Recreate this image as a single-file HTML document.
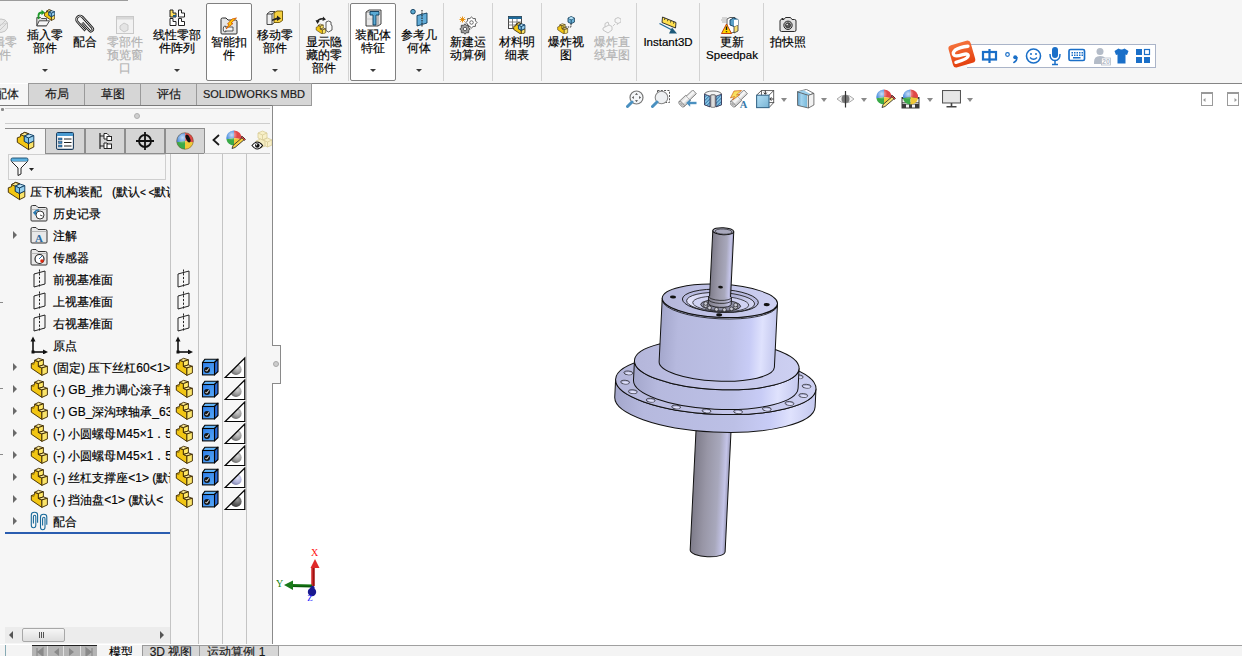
<!DOCTYPE html><html><head><meta charset="utf-8"><style>
*{margin:0;padding:0;box-sizing:border-box}
html,body{width:1242px;height:656px;overflow:hidden;background:#fff;font-family:"Liberation Sans",sans-serif;font-size:12px;color:#000;-webkit-text-stroke:0.18px currentColor}
div,svg{position:absolute}
.tx{white-space:nowrap;text-align:center;font-size:12px;line-height:13px;color:#000}
.dis{color:#b2b2b2}
.sep{top:3px;width:1px;height:78px;background:#d2d2d2}
.arr{width:0;height:0;border-left:3px solid transparent;border-right:3px solid transparent;border-top:3px solid #3a3a3a}
.box{top:3px;height:78px;border:1px solid #808080;border-radius:2px;background:#fff}
.tab{top:83px;height:23px;background:#d6d6d6;border:1px solid #9a9a9a;text-align:center;line-height:21px;font-size:12px;color:#1a1a1a}
.row{height:22px;white-space:nowrap;line-height:22px;font-size:12px;color:#000}
.vl{top:154px;width:1px;height:490px;background:#c4c4c4}
.exp{width:0;height:0;border-top:4px solid transparent;border-bottom:4px solid transparent;border-left:4px solid #6a6a6a}
.harr{width:0;height:0;border-left:3.5px solid transparent;border-right:3.5px solid transparent;border-top:4px solid #8a8a8a}
</style></head><body>
<div style="left:0;top:0;width:1242px;height:83px;background:#f6f6f6"></div>
<div style="left:28px;top:83px;width:1214px;height:1px;background:#858585"></div>
<div style="left:0;top:0;width:128px;height:1px;background:#9c9c9c"></div>
<div class="box" style="left:206px;width:46px"></div>
<div class="box" style="left:350px;width:46px"></div>
<div class="sep" style="left:299px"></div>
<div class="sep" style="left:348px"></div>
<div class="sep" style="left:443px"></div>
<div class="sep" style="left:492px"></div>
<div class="sep" style="left:541px"></div>
<div class="sep" style="left:636px"></div>
<div class="sep" style="left:699px"></div>
<div class="sep" style="left:763px"></div>
<div class="tx dis" style="left:-41px;width:80px;top:35.75px">编辑零<br>部件</div>
<div class="tx" style="left:5px;width:80px;top:28.75px">插入零<br>部件</div>
<div class="arr" style="left:42px;top:69px"></div>
<div class="tx" style="left:45px;width:80px;top:35.75px">配合</div>
<div class="tx dis" style="left:85px;width:80px;top:35.75px">零部件<br>预览窗<br>口</div>
<div class="tx" style="left:136.5px;width:80px;top:28.75px">线性零部<br>件阵列</div>
<div class="arr" style="left:173.5px;top:69px"></div>
<div class="tx" style="left:189px;width:80px;top:35.75px">智能扣<br>件</div>
<div class="tx" style="left:235px;width:80px;top:28.75px">移动零<br>部件</div>
<div class="arr" style="left:272px;top:69px"></div>
<div class="tx" style="left:284px;width:80px;top:36.25px">显示隐<br>藏的零<br>部件</div>
<div class="tx" style="left:333px;width:80px;top:28.75px">装配体<br>特征</div>
<div class="arr" style="left:370px;top:69px"></div>
<div class="tx" style="left:379px;width:80px;top:28.75px">参考几<br>何体</div>
<div class="arr" style="left:416px;top:69px"></div>
<div class="tx" style="left:428px;width:80px;top:35.75px">新建运<br>动算例</div>
<div class="tx" style="left:477px;width:80px;top:35.75px">材料明<br>细表</div>
<div class="tx" style="left:526px;width:80px;top:35.75px">爆炸视<br>图</div>
<div class="tx dis" style="left:572px;width:80px;top:35.75px">爆炸直<br>线草图</div>
<div class="tx" style="left:628px;width:80px;top:35.75px"><span style="font-size:11.5px">Instant3D</span></div>
<div class="tx" style="left:692px;width:80px;top:35.75px">更新<br><span style="font-size:11.5px">Speedpak</span></div>
<div class="tx" style="left:748px;width:80px;top:35.75px">拍快照</div>
<svg style="left:-8px;top:16px;width:18px;height:18px" viewBox="0 0 18 18"><path d="M2 7 Q4 3 9 3 Q14 3 15.5 7 L15.5 12 Q14 16 9 16.5 Q4 16 2 12Z" fill="#e8e8e8" stroke="#c4c4c4" stroke-width="1"/><path d="M5 13 L13 5 M7 15 L15 7" stroke="#c8c8c8" stroke-width="1"/><path d="M2 7 Q9 10 15.5 7" fill="none" stroke="#cfcfcf" stroke-width="0.8"/></svg>
<svg style="left:36px;top:9px;width:19px;height:18px" viewBox="0 0 19 18"><path d="M0.8 8.5 L4.5 8.5 L5.5 9.5 L10.5 9.5 L10.5 16.8 L0.8 16.8Z" fill="#dcdcdc" stroke="#3a3a3a" stroke-width="0.9"/><path d="M0.8 16.8 L3.2 11.8 L13.5 11.8 L10.5 16.8Z" fill="#f6f6f6" stroke="#3a3a3a" stroke-width="0.9"/><path d="M2.5 10 L2.5 6.5 Q2.5 3.5 6 3.5" fill="none" stroke="#1e9a2a" stroke-width="1.8"/><path d="M5.5 0.8 L9 3.5 L5.5 6.2Z" fill="#1e9a2a"/><g transform="translate(8.3 0.5) scale(0.62) translate(-3 -2)"><path d="M3.3 12.3 L3.3 7.8 L6.6 6.6 L6.6 4.6 L10.6 2.4 L14.7 3.8 L10.3 6.2 L10.3 11.4 L14.5 13.5 L14.5 19.6Z" fill="#f2c614" stroke="#3a2600" stroke-width="1.2" stroke-linejoin="round"/><path d="M6.6 4.6 L10.6 2.4 L14.7 3.8 L10.3 6.2Z" fill="#f8e690" stroke="#3a2600" stroke-width="1.2" stroke-linejoin="round"/><path d="M14.5 13.5 L19.8 11 L19.8 17 L14.5 19.6Z" fill="#fae46a" stroke="#3a2600" stroke-width="1.2" stroke-linejoin="round"/><path d="M10.3 6.1 L15 4 L19.8 5.6 L14.5 8Z" fill="#b8e0f4" stroke="#0c3a60" stroke-width="1.2" stroke-linejoin="round"/><path d="M10.3 6.1 L14.5 8 L14.5 13.5 L10.3 11.4Z" fill="#7cc0e6" stroke="#0c3a60" stroke-width="1.2" stroke-linejoin="round"/><path d="M14.5 8 L19.8 5.6 L19.8 11 L14.5 13.5Z" fill="#98d0ee" stroke="#0c3a60" stroke-width="1.2" stroke-linejoin="round"/></g></svg>
<svg style="left:74px;top:14px;width:22px;height:22px" viewBox="0 0 22 22"><g transform="translate(11 11) rotate(-42) translate(-4 -11.5)"><path d="M3.5 8 L3.5 18.5 A2 2 0 0 0 7.5 18.5 L7.5 4 A3.5 3.5 0 0 0 0.5 4 L0.5 16" fill="none" stroke="#1a1a1a" stroke-width="2.5"/><path d="M3.5 8 L3.5 18.5 A2 2 0 0 0 7.5 18.5 L7.5 4 A3.5 3.5 0 0 0 0.5 4 L0.5 16" fill="none" stroke="#f4f4f4" stroke-width="0.8"/></g></svg>
<svg style="left:116px;top:16px;width:18px;height:18px" viewBox="0 0 18 18"><rect x="0.5" y="0.5" width="17" height="17" fill="#f2f2f2" stroke="#c8c8c8" stroke-width="1"/><rect x="1" y="1" width="16" height="2.5" fill="#d8d8d8"/><path d="M4 10 L8 7 L12 9 L12 14 L8 16 L4 13Z" fill="#e4e4e4" stroke="#c4c4c4" stroke-width="0.9"/></svg>
<svg style="left:169px;top:9px;width:17px;height:17px" viewBox="0 0 17 17"><path d="M1 1 L4 1 L4 4 L7 4 L7 8 L1 8Z" fill="#ffe060" stroke="#222" stroke-width="1"/><rect x="4" y="6" width="3" height="1.8" fill="#1a5a8a"/><path d="M9.5 1 L12.5 1 L12.5 4 L15.5 4 L15.5 8 L9.5 8Z" fill="#fff" stroke="#222" stroke-width="1"/><path d="M1 9.5 L4 9.5 L4 12.5 L7 12.5 L7 16.5 L1 16.5Z" fill="#fff" stroke="#222" stroke-width="1"/><path d="M9.5 9.5 L12.5 9.5 L12.5 12.5 L15.5 12.5 L15.5 16.5 L9.5 16.5Z" fill="#fff" stroke="#222" stroke-width="1"/></svg>
<svg style="left:220px;top:17px;width:18px;height:18px" viewBox="0 0 18 18"><path d="M1 2.5 Q1 1 2.5 1 L6 1 L8 3 L15.5 3 Q17 3 17 4.5 L17 16 Q17 17 16 17 L2 17 Q1 17 1 16Z" fill="#e6e6e6" stroke="#2a2a2a" stroke-width="1"/><ellipse cx="5" cy="12" rx="1.8" ry="3" fill="#f4f4f4" stroke="#333" stroke-width="0.8"/><path d="M5 10 L13 10 L13 14 L5 14" fill="#f4f4f4" stroke="#333" stroke-width="0.8"/><path d="M16.5 1 L11 6 L13 6.5 L6 12 L9 7.5 L7.5 7 L12 2Z" fill="#ffcc00" stroke="#d05000" stroke-width="0.8"/></svg>
<svg style="left:266px;top:10px;width:18px;height:17px" viewBox="0 0 18 17"><path d="M1 4 L4 1.5 L9 1.5 L9 12 L6 14.5 L1 14.5Z" fill="#f0f0f0" stroke="#333" stroke-width="0.9"/><path d="M1 4 L6 4 L6 14.5 M6 4 L9 1.5" fill="none" stroke="#333" stroke-width="0.9"/><path d="M8 3 L11 1 L16.5 1 L16.5 10.5 L13.5 12.5 L8 12.5Z" fill="#f4d040" stroke="#6a5000" stroke-width="0.9"/><path d="M6 9.5 L11 7.5 L11 5.5 L15 8.5 L11 11 L11 9.5 L6 11Z" fill="#222"/></svg>
<svg style="left:315px;top:16px;width:18px;height:18px" viewBox="0 0 18 18"><path d="M2 6 Q4 2 9 3" fill="none" stroke="#222" stroke-width="1.6"/><path d="M8 0.5 L11 3.5 L7.5 5Z" fill="#222"/><path d="M0.5 4 L2.5 8 L4.5 5Z" fill="#222"/><g transform="translate(1 8) scale(0.589) translate(-3 -2)"><path d="M3.3 12.2 L3.3 7.6 L6.6 6.4 L6.6 4.3 L10.4 5.6 L10.4 10.5 L13.9 11.9 L13.9 19.4Z" fill="#f2c614" stroke="#3a2600" stroke-width="0.9" stroke-linejoin="round"/><path d="M6.6 4.3 L10.6 2.3 L15.4 3.8 L10.4 5.6Z" fill="#f8e690" stroke="#3a2600" stroke-width="0.9" stroke-linejoin="round"/><path d="M10.4 5.6 L15.4 3.8 L15.4 8.9 L10.4 10.5Z" fill="#ffe868" stroke="#3a2600" stroke-width="0.9" stroke-linejoin="round"/><path d="M10.4 10.5 L15.4 8.9 L19.4 10.3 L13.9 11.9Z" fill="#faeaa0" stroke="#3a2600" stroke-width="0.9" stroke-linejoin="round"/><path d="M13.9 11.9 L19.4 10.3 L19.4 16.9 L13.9 19.4Z" fill="#fae46a" stroke="#3a2600" stroke-width="0.9" stroke-linejoin="round"/></g><path d="M11 6 L13.5 5 L16 6 L16 9 L17 9.5 L17 14 L13.5 16 L11 14.5Z" fill="#fafafa" stroke="#333" stroke-width="0.8"/></svg>
<svg style="left:365px;top:9px;width:17px;height:18px" viewBox="0 0 17 18"><path d="M1 3 L4 1 L16 1 L16 15 L13 17 L1 17Z" fill="#e8e8e8" stroke="#2a2a2a" stroke-width="0.9"/><path d="M1 3 L13 3 L13 17" fill="none" stroke="#666" stroke-width="0.7"/><path d="M1.5 10 L13 10" stroke="#bbb" stroke-width="0.6"/><path d="M5 2.5 L14 2.5 L14 6 L11 6 L11 16 L8 16 L8 6 L5 6Z" fill="#5aaad4" stroke="#0c3a5a" stroke-width="0.9"/></svg>
<svg style="left:410px;top:9px;width:18px;height:18px" viewBox="0 0 18 18"><circle cx="3" cy="2.7" r="2.3" fill="#5aa8d0" stroke="#0c3a5a" stroke-width="0.9"/><path d="M7 6.5 L17 4 L17 14 L7 17Z" fill="#62acd8" stroke="#0c3a5a" stroke-width="0.9"/><path d="M12 1 L12 18" stroke="#111" stroke-width="1" stroke-dasharray="1.5 1"/></svg>
<svg style="left:459px;top:16px;width:19px;height:19px" viewBox="0 0 19 19"><path d="M18.00 6.50 L16.46 8.14 L16.39 10.39 L14.14 10.46 L12.50 12.00 L10.86 10.46 L8.61 10.39 L8.54 8.14 L7.00 6.50 L8.54 4.86 L8.61 2.61 L10.86 2.54 L12.50 1.00 L14.14 2.54 L16.39 2.61 L16.46 4.86Z" fill="#fff" stroke="#333" stroke-width="0.8" stroke-linejoin="round"/><circle cx="12.5" cy="6.5" r="1.76" fill="#fff" stroke="#333" stroke-width="0.7"/><path d="M11.20 13.00 L9.75 14.55 L9.68 16.68 L7.55 16.75 L6.00 18.20 L4.45 16.75 L2.32 16.68 L2.25 14.55 L0.80 13.00 L2.25 11.45 L2.32 9.32 L4.45 9.25 L6.00 7.80 L7.55 9.25 L9.68 9.32 L9.75 11.45Z" fill="#9a9a9a" stroke="#333" stroke-width="0.8" stroke-linejoin="round"/><circle cx="6" cy="13" r="1.66" fill="#fff" stroke="#333" stroke-width="0.7"/><path d="M3.5 0.5 L3.5 6.5 M0.5 3.5 L6.5 3.5 M1.3 1.3 L5.7 5.7 M5.7 1.3 L1.3 5.7" stroke="#e88a00" stroke-width="0.9"/></svg>
<svg style="left:508px;top:16px;width:18px;height:18px" viewBox="0 0 18 18"><rect x="0.5" y="0.5" width="13" height="12" fill="#fff" stroke="#333" stroke-width="0.9"/><rect x="0.5" y="0.5" width="13" height="2.5" fill="#1e6a9a"/><path d="M0.5 6 L13.5 6 M0.5 9 L13.5 9 M4.5 3 L4.5 12.5 M9 3 L9 12.5" stroke="#666" stroke-width="0.8"/><g transform="translate(5.5 6.5) scale(0.68) translate(-3 -2)"><path d="M3.3 12.3 L3.3 7.8 L6.6 6.6 L6.6 4.6 L10.6 2.4 L14.7 3.8 L10.3 6.2 L10.3 11.4 L14.5 13.5 L14.5 19.6Z" fill="#f2c614" stroke="#3a2600" stroke-width="1.2" stroke-linejoin="round"/><path d="M6.6 4.6 L10.6 2.4 L14.7 3.8 L10.3 6.2Z" fill="#f8e690" stroke="#3a2600" stroke-width="1.2" stroke-linejoin="round"/><path d="M14.5 13.5 L19.8 11 L19.8 17 L14.5 19.6Z" fill="#fae46a" stroke="#3a2600" stroke-width="1.2" stroke-linejoin="round"/><path d="M10.3 6.1 L15 4 L19.8 5.6 L14.5 8Z" fill="#b8e0f4" stroke="#0c3a60" stroke-width="1.2" stroke-linejoin="round"/><path d="M10.3 6.1 L14.5 8 L14.5 13.5 L10.3 11.4Z" fill="#7cc0e6" stroke="#0c3a60" stroke-width="1.2" stroke-linejoin="round"/><path d="M14.5 8 L19.8 5.6 L19.8 11 L14.5 13.5Z" fill="#98d0ee" stroke="#0c3a60" stroke-width="1.2" stroke-linejoin="round"/></g></svg>
<svg style="left:557px;top:16px;width:18px;height:18px" viewBox="0 0 18 18"><g transform="translate(0.5 7.5) scale(0.62) translate(-3 -2)"><path d="M3.3 12.2 L3.3 7.6 L6.6 6.4 L6.6 4.3 L10.4 5.6 L10.4 10.5 L13.9 11.9 L13.9 19.4Z" fill="#f2c614" stroke="#3a2600" stroke-width="0.9" stroke-linejoin="round"/><path d="M6.6 4.3 L10.6 2.3 L15.4 3.8 L10.4 5.6Z" fill="#f8e690" stroke="#3a2600" stroke-width="0.9" stroke-linejoin="round"/><path d="M10.4 5.6 L15.4 3.8 L15.4 8.9 L10.4 10.5Z" fill="#ffe868" stroke="#3a2600" stroke-width="0.9" stroke-linejoin="round"/><path d="M10.4 10.5 L15.4 8.9 L19.4 10.3 L13.9 11.9Z" fill="#faeaa0" stroke="#3a2600" stroke-width="0.9" stroke-linejoin="round"/><path d="M13.9 11.9 L19.4 10.3 L19.4 16.9 L13.9 19.4Z" fill="#fae46a" stroke="#3a2600" stroke-width="0.9" stroke-linejoin="round"/></g><path d="M11.00 2.10 14.20 0.50 17.40 2.10 17.40 6.10 14.20 7.70 11.00 6.10Z" fill="#6fb6dc" stroke="#0c3550" stroke-width="0.8"/><path d="M11.00 2.10 14.20 3.70 17.40 2.10 M14.20 3.70 14.20 7.70" fill="none" stroke="#0c3550" stroke-width="0.8"/><path d="M11.40 2.26 14.20 0.90 17.00 2.26 14.20 3.54Z" fill="#b8e2f6"/><path d="M6 11 L14 11 L14 7.5" fill="none" stroke="#111" stroke-width="0.9" stroke-dasharray="1.4 1"/></svg>
<svg style="left:602px;top:16px;width:19px;height:18px" viewBox="0 0 19 18"><path d="M1 12 L7 9 L10 10.5 L10 14 L6 17 L1 14Z" fill="#f6f6f6" stroke="#c0c0c0" stroke-width="0.9"/><path d="M3 11 L3 7.5 L6 6 L7 9" fill="none" stroke="#c0c0c0" stroke-width="0.9"/><path d="M13 3 L16 1.5 L19 3 L19 6 L16 7.5 L13 6Z" fill="#f6f6f6" stroke="#c0c0c0" stroke-width="0.9"/><path d="M11 10 L13 8 M15 9 L16 7" stroke="#c4c4c4" stroke-width="0.9"/></svg>
<svg style="left:659px;top:16px;width:18px;height:18px" viewBox="0 0 18 18"><path d="M3.5 1 L17 6.5 L16.5 12 L3 6.5Z" fill="#ffe050" stroke="#222" stroke-width="0.9"/><path d="M6 2 L5.5 4 M9 3.2 L8.5 5.2 M12 4.5 L11.5 6.5 M15 5.7 L14.5 7.7" stroke="#222" stroke-width="0.8"/><path d="M0.5 7.5 L13 14" stroke="#1e6a9a" stroke-width="1.4"/><path d="M10 17.5 L18 17.5 L13 11.5Z" fill="#1e5a7a"/></svg>
<svg style="left:721px;top:16px;width:20px;height:18px" viewBox="0 0 20 18"><path d="M1 2 L6 2 M0 4 L5 4 M1 6 L5 6" stroke="#888" stroke-width="0.6"/><path d="M6 3 L9 1.5 L14 1.5 L14 16 L10 17 L6 16Z" fill="#fff" stroke="#333" stroke-width="0.8"/><path d="M9 4 L12.5 2 L17 3.5 L17 9 L13 10.5 L9 9Z" fill="#5aa0c8" stroke="#0c3a5a" stroke-width="0.9"/><path d="M13 10.5 L17 9 L17 15 L13 17Z" fill="#f8e070" stroke="#333" stroke-width="0.8"/><path d="M13 4 L17 3.5 L17 9 L13 10.5Z" fill="#fff"/><path d="M5.5 8 L10.5 17.5 L0.5 17.5Z" fill="#ffd400" stroke="#c03000" stroke-width="0.9"/><path d="M5.5 10.5 L5.5 14 M5.5 15.2 L5.5 16.3" stroke="#111" stroke-width="1.4"/></svg>
<svg style="left:779px;top:16px;width:18px;height:16px" viewBox="0 0 18 16"><path d="M1 5 Q1 3.5 2.5 3.5 L5 3.5 L6.5 1.5 L11.5 1.5 L13 3.5 L15.5 3.5 Q17 3.5 17 5 L17 14 Q17 15.5 15.5 15.5 L2.5 15.5 Q1 15.5 1 14Z" fill="#e4e4e4" stroke="#2a2a2a" stroke-width="1"/><path d="M2.5 2.5 L4.5 2.5" stroke="#2a2a2a" stroke-width="1"/><circle cx="9" cy="9.3" r="4.2" fill="#bdbdbd" stroke="#2a2a2a" stroke-width="1"/><circle cx="9" cy="9.3" r="2.5" fill="#555" stroke="#222" stroke-width="0.7"/><circle cx="8.2" cy="8.5" r="0.8" fill="#eee"/></svg>
<svg style="left:560px;top:200px;width:300px;height:380px" viewBox="560 200 300 380"><defs><linearGradient id="gH" x1="0" x2="1" y1="0" y2="0"><stop offset="0" stop-color="#a4a7cc"/><stop offset="0.15" stop-color="#b6b9de"/><stop offset="0.6" stop-color="#bcc0e6"/><stop offset="0.78" stop-color="#c8ccf6"/><stop offset="0.88" stop-color="#dfe2fd"/><stop offset="1" stop-color="#c4c8ee"/></linearGradient><linearGradient id="gT" x1="0" x2="1" y1="0" y2="0"><stop offset="0" stop-color="#b4b6da"/><stop offset="0.5" stop-color="#c2c4e8"/><stop offset="1" stop-color="#cdd0f2"/></linearGradient><linearGradient id="gS" x1="0" x2="1" y1="0" y2="0"><stop offset="0" stop-color="#7e7c8a"/><stop offset="0.35" stop-color="#9896a6"/><stop offset="0.7" stop-color="#a8a8bc"/><stop offset="0.9" stop-color="#c4c4e8"/><stop offset="1" stop-color="#9a9ab8"/></linearGradient></defs><g transform="translate(716 380) rotate(2.8)" stroke="#111" stroke-width="1" stroke-linejoin="round"><path d="M-17.5 10 L-17.5 171 A17.5 6 0 0 0 17.5 171 L17.5 10Z" fill="url(#gS)"/><path d="M-100.3 4.2 L-100.3 22 A100.3 30 0 0 0 100.3 22 L100.3 4.2 A100.3 30 0 0 1 -100.3 4.2Z" fill="url(#gH)"/><ellipse cx="0" cy="4.2" rx="100.3" ry="30" fill="url(#gT)"/><ellipse cx="87.9" cy="11.2" rx="4.4" ry="1.9" fill="#aeb0d4" stroke="#222" stroke-width="0.7"/><ellipse cx="88.3" cy="11.7" rx="3.2" ry="1.1" fill="#dfe0fa" stroke="none"/><ellipse cx="74.5" cy="19.8" rx="4.4" ry="1.9" fill="#aeb0d4" stroke="#222" stroke-width="0.7"/><ellipse cx="74.9" cy="20.3" rx="3.2" ry="1.1" fill="#dfe0fa" stroke="none"/><ellipse cx="52.2" cy="26.5" rx="4.4" ry="1.9" fill="#aeb0d4" stroke="#222" stroke-width="0.7"/><ellipse cx="52.6" cy="27.0" rx="3.2" ry="1.1" fill="#dfe0fa" stroke="none"/><ellipse cx="23.6" cy="30.5" rx="4.4" ry="1.9" fill="#aeb0d4" stroke="#222" stroke-width="0.7"/><ellipse cx="24.0" cy="31.0" rx="3.2" ry="1.1" fill="#dfe0fa" stroke="none"/><ellipse cx="-7.9" cy="31.3" rx="4.4" ry="1.9" fill="#aeb0d4" stroke="#222" stroke-width="0.7"/><ellipse cx="-7.5" cy="31.8" rx="3.2" ry="1.1" fill="#dfe0fa" stroke="none"/><ellipse cx="-38.5" cy="28.9" rx="4.4" ry="1.9" fill="#aeb0d4" stroke="#222" stroke-width="0.7"/><ellipse cx="-38.1" cy="29.4" rx="3.2" ry="1.1" fill="#dfe0fa" stroke="none"/><ellipse cx="-64.3" cy="23.4" rx="4.4" ry="1.9" fill="#aeb0d4" stroke="#222" stroke-width="0.7"/><ellipse cx="-63.9" cy="23.9" rx="3.2" ry="1.1" fill="#dfe0fa" stroke="none"/><ellipse cx="-82.5" cy="15.7" rx="4.4" ry="1.9" fill="#aeb0d4" stroke="#222" stroke-width="0.7"/><ellipse cx="-82.1" cy="16.2" rx="3.2" ry="1.1" fill="#dfe0fa" stroke="none"/><ellipse cx="-90.7" cy="6.6" rx="4.4" ry="1.9" fill="#aeb0d4" stroke="#222" stroke-width="0.7"/><ellipse cx="-90.3" cy="7.1" rx="3.2" ry="1.1" fill="#dfe0fa" stroke="none"/><ellipse cx="-87.9" cy="-2.8" rx="4.4" ry="1.9" fill="#aeb0d4" stroke="#222" stroke-width="0.7"/><ellipse cx="-87.5" cy="-2.3" rx="3.2" ry="1.1" fill="#dfe0fa" stroke="none"/><ellipse cx="82.5" cy="-7.3" rx="4.4" ry="1.9" fill="#aeb0d4" stroke="#222" stroke-width="0.7"/><ellipse cx="82.9" cy="-6.8" rx="3.2" ry="1.1" fill="#dfe0fa" stroke="none"/><ellipse cx="90.7" cy="1.8" rx="4.4" ry="1.9" fill="#aeb0d4" stroke="#222" stroke-width="0.7"/><ellipse cx="91.1" cy="2.3" rx="3.2" ry="1.1" fill="#dfe0fa" stroke="none"/><path d="M-82.4 -15.5 L-82.4 4.2 A82.4 25 0 0 0 82.4 4.2 L82.4 -15.5 A82.4 25 0 0 1 -82.4 -15.5Z" fill="url(#gH)"/><ellipse cx="0" cy="-15.5" rx="82.4" ry="25" fill="url(#gT)"/><path d="M-57.7 -79.3 L-57.7 -15.5 A57.7 16.5 0 0 0 57.7 -15.5 L57.7 -79.3 A57.7 16.5 0 0 1 -57.7 -79.3Z" fill="url(#gH)"/><ellipse cx="0" cy="-79.3" rx="57.7" ry="16.5" fill="url(#gT)"/><path d="M-57.6 -76.8 A57.7 16.5 0 0 0 57.6 -76.8" fill="none" stroke-width="0.8"/><defs><linearGradient id="gB" x1="0" x2="1"><stop offset="0" stop-color="#e6e6fc"/><stop offset="0.4" stop-color="#c4c6ea"/><stop offset="0.7" stop-color="#b0b2d8"/><stop offset="1" stop-color="#d8daf6"/></linearGradient></defs><ellipse cx="0.5" cy="-79.3" rx="38" ry="11.5" fill="#b8badf" stroke-width="0.9"/><ellipse cx="0.8" cy="-77.8" rx="34" ry="9.8" fill="url(#gB)" stroke-width="0.8"/><ellipse cx="1" cy="-76.3" rx="28" ry="7.6" fill="#d0d2f2" stroke-width="0.7"/><ellipse cx="1" cy="-74.8" rx="20" ry="5.6" fill="#8a8aa0" stroke-width="0.7"/><circle cx="16.0" cy="-73.7" r="1.9" fill="#c8c8d4" stroke-width="0.6"/><circle cx="12.0" cy="-71.8" r="1.9" fill="#c8c8d4" stroke-width="0.6"/><circle cx="5.0" cy="-70.6" r="1.9" fill="#c8c8d4" stroke-width="0.6"/><circle cx="-3.0" cy="-70.6" r="1.9" fill="#c8c8d4" stroke-width="0.6"/><circle cx="-10.0" cy="-71.8" r="1.9" fill="#c8c8d4" stroke-width="0.6"/><circle cx="-14.0" cy="-73.7" r="1.9" fill="#c8c8d4" stroke-width="0.6"/><circle cx="-14.0" cy="-75.9" r="1.9" fill="#c8c8d4" stroke-width="0.6"/><circle cx="16.0" cy="-75.9" r="1.9" fill="#c8c8d4" stroke-width="0.6"/><ellipse cx="-47" cy="-80.8" rx="3" ry="1.6" fill="#111" stroke="none"/><ellipse cx="47" cy="-77.8" rx="3" ry="1.6" fill="#111" stroke="none"/><ellipse cx="0" cy="-65.3" rx="3" ry="1.6" fill="#111" stroke="none"/><path d="M-10.5 -149 L-10.5 -78.3 A10.5 3.5 0 0 0 10.5 -78.3 L10.5 -149Z" fill="url(#gS)"/><path d="M-11.5 -83.3 L-11.5 -76.3 A11.5 3.6 0 0 0 11.5 -76.3 L11.5 -83.3" fill="url(#gS)" stroke-width="0.8"/><path d="M-11.5 -83.3 A11.5 3.6 0 0 0 11.5 -83.3 M-11.5 -80.3 A11.5 3.6 0 0 0 11.5 -80.3" fill="none" stroke-width="0.7"/><ellipse cx="0" cy="-149" rx="10.5" ry="3.5" fill="#b4b4c8"/><ellipse cx="0.3" cy="-148.6" rx="8.5" ry="2.6" fill="#a8a8bc" stroke-width="0.6"/><ellipse cx="0" cy="-93" rx="2.4" ry="1.4" fill="#111" stroke="none"/></g></svg>
<div style="left:0;top:84px;width:28px;height:21px;background:#f6f6f6"></div>
<div class="tx" style="left:-30px;width:49px;top:87px;line-height:14px;text-align:right;color:#1a1a1a">装配体</div>
<div class="tab" style="left:28px;width:57px">布局</div>
<div class="tab" style="left:84px;width:57px">草图</div>
<div class="tab" style="left:140px;width:57px">评估</div>
<div class="tab" style="left:196px;width:116px;font-size:11px;white-space:nowrap">SOLIDWORKS MBD</div>
<div style="left:0;top:105px;width:272px;height:539px;background:#f6f6f6"></div>
<div style="left:0;top:105px;width:273px;height:1px;background:#7a7a7a"></div>
<div style="left:1px;top:108px;width:3px;height:3px;background:#8a8a8a;border-radius:1px"></div>
<div style="left:0;top:302px;width:3px;height:1px;background:#8a8a8a"></div>
<div style="left:0;top:388px;width:3px;height:1px;background:#8a8a8a"></div>
<div style="left:0;top:454px;width:3px;height:1px;background:#8a8a8a"></div>
<div style="left:5px;top:108px;width:265px;height:1px;background:#cdcdcd"></div>
<div style="left:5px;top:123px;width:265px;height:1px;background:#cdcdcd"></div>
<div style="left:134px;top:113px;width:6px;height:6px;border-radius:3px;background:#cfcfcf;border:1px solid #b0b0b0"></div>
<div style="left:5px;top:128px;width:200px;height:1px;background:#8e8e8e"></div>
<div style="left:44.5px;top:128px;width:40.5px;height:26px;background:#d5d5d5;border:1px solid #8e8e8e"></div>
<div style="left:84.5px;top:128px;width:40.5px;height:26px;background:#d5d5d5;border:1px solid #8e8e8e"></div>
<div style="left:124.5px;top:128px;width:40.5px;height:26px;background:#d5d5d5;border:1px solid #8e8e8e"></div>
<div style="left:164.5px;top:128px;width:40.5px;height:26px;background:#d5d5d5;border:1px solid #8e8e8e"></div>
<div style="left:204px;top:153px;width:66px;height:1px;background:#c8c8c8"></div>
<div style="left:8px;top:154px;width:158px;height:26px;border:1px solid #cfcfcf"></div>
<div class="vl" style="left:170px"></div>
<div class="vl" style="left:198px"></div>
<div class="vl" style="left:222px"></div>
<div class="vl" style="left:246px"></div>
<div style="left:0;top:180px;width:170px;height:360px;overflow:hidden">
<div class="row" style="left:30px;top:0.5px">压下机构装配&nbsp;&nbsp; (默认<span style="font-size:10px">&lt;&nbsp;&lt;</span>默认_显示状态-1&gt;&gt;)</div>
<div class="row" style="left:53px;top:22.5px">历史记录</div>
<div class="row" style="left:53px;top:44.5px">注解</div>
<div class="row" style="left:53px;top:66.5px">传感器</div>
<div class="row" style="left:53px;top:88.5px">前视基准面</div>
<div class="row" style="left:53px;top:110.5px">上视基准面</div>
<div class="row" style="left:53px;top:132.5px">右视基准面</div>
<div class="row" style="left:53px;top:154.5px">原点</div>
<div class="row" style="left:53px;top:176.5px">(固定) 压下丝杠60&lt;1&gt; (默认)</div>
<div class="row" style="left:53px;top:198.5px">(-) GB_推力调心滚子轴承</div>
<div class="row" style="left:53px;top:220.5px">(-) GB_深沟球轴承_6306</div>
<div class="row" style="left:53px;top:242.5px">(-) 小圆螺母M45×1．5</div>
<div class="row" style="left:53px;top:264.5px">(-) 小圆螺母M45×1．5</div>
<div class="row" style="left:53px;top:286.5px">(-) 丝杠支撑座&lt;1&gt; (默认)</div>
<div class="row" style="left:53px;top:308.5px">(-) 挡油盘&lt;1&gt; (默认&lt;</div>
<div class="row" style="left:53px;top:330.5px">配合</div>
</div>
<svg style="left:5px;top:180px;width:24px;height:24px" viewBox="0 0 24 24"><path d="M3.3 12.3 L3.3 7.8 L6.6 6.6 L6.6 4.6 L10.6 2.4 L14.7 3.8 L10.3 6.2 L10.3 11.4 L14.5 13.5 L14.5 19.6Z" fill="#f2c614" stroke="#3a2600" stroke-width="0.9" stroke-linejoin="round"/><path d="M6.6 4.6 L10.6 2.4 L14.7 3.8 L10.3 6.2Z" fill="#f8e690" stroke="#3a2600" stroke-width="0.9" stroke-linejoin="round"/><path d="M14.5 13.5 L19.8 11 L19.8 17 L14.5 19.6Z" fill="#fae46a" stroke="#3a2600" stroke-width="0.9" stroke-linejoin="round"/><path d="M10.3 6.1 L15 4 L19.8 5.6 L14.5 8Z" fill="#b8e0f4" stroke="#0c3a60" stroke-width="0.9" stroke-linejoin="round"/><path d="M10.3 6.1 L14.5 8 L14.5 13.5 L10.3 11.4Z" fill="#7cc0e6" stroke="#0c3a60" stroke-width="0.9" stroke-linejoin="round"/><path d="M14.5 8 L19.8 5.6 L19.8 11 L14.5 13.5Z" fill="#98d0ee" stroke="#0c3a60" stroke-width="0.9" stroke-linejoin="round"/></svg>
<svg style="left:30px;top:204px;width:18px;height:18px" viewBox="0 0 18 18"><path d="M1 3 Q1 1.5 2.5 1.5 L6 1.5 L8 3.5 L15.5 3.5 Q17 3.5 17 5 L17 16 Q17 17 16 17 L2 17 Q1 17 1 16Z" fill="#e8e8e8" stroke="#333" stroke-width="1"/><path d="M1.5 5.5 L16.5 5.5" stroke="#aaa" stroke-width="0.8"/><circle cx="10" cy="11" r="4" fill="#fff" stroke="#222" stroke-width="0.9"/><path d="M10 11 L12.5 12" stroke="#222" stroke-width="0.8"/><path d="M4 9.5 A5.5 5.5 0 0 1 9 6" fill="none" stroke="#2a7ab0" stroke-width="1.6"/><path d="M3 8 L5.5 12 L6.5 8Z" fill="#2a7ab0"/></svg>
<div class="exp" style="left:13px;top:231px"></div>
<svg style="left:30px;top:226px;width:18px;height:18px" viewBox="0 0 18 18"><path d="M1 3 Q1 1.5 2.5 1.5 L6 1.5 L8 3.5 L15.5 3.5 Q17 3.5 17 5 L17 16 Q17 17 16 17 L2 17 Q1 17 1 16Z" fill="#e8e8e8" stroke="#333" stroke-width="1"/><path d="M1.5 5.5 L16.5 5.5" stroke="#aaa" stroke-width="0.8"/><text x="9" y="16" font-family="Liberation Serif" font-weight="bold" font-size="11" fill="#2a6aa0" text-anchor="middle">A</text></svg>
<svg style="left:30px;top:248px;width:18px;height:18px" viewBox="0 0 18 18"><path d="M1 3 Q1 1.5 2.5 1.5 L6 1.5 L8 3.5 L15.5 3.5 Q17 3.5 17 5 L17 16 Q17 17 16 17 L2 17 Q1 17 1 16Z" fill="#e8e8e8" stroke="#333" stroke-width="1"/><path d="M1.5 5.5 L16.5 5.5" stroke="#aaa" stroke-width="0.8"/><circle cx="9.5" cy="11" r="4.5" fill="#fff" stroke="#222" stroke-width="1.2"/><path d="M9 11 L12 8" stroke="#2a6aa0" stroke-width="1"/><circle cx="12" cy="13" r="1.8" fill="#e02a10"/></svg>
<svg style="left:33px;top:269px;width:13px;height:20px" viewBox="0 0 13 20"><path d="M1 5 L12 2 L12 15 L1 18Z" fill="none" stroke="#222" stroke-width="1"/><path d="M6.5 0.5 L6.5 19" stroke="#222" stroke-width="1" stroke-dasharray="2.2 1.5"/></svg>
<svg style="left:33px;top:291px;width:13px;height:20px" viewBox="0 0 13 20"><path d="M1 5 L12 2 L12 15 L1 18Z" fill="none" stroke="#222" stroke-width="1"/><path d="M6.5 0.5 L6.5 19" stroke="#222" stroke-width="1" stroke-dasharray="2.2 1.5"/></svg>
<svg style="left:33px;top:313px;width:13px;height:20px" viewBox="0 0 13 20"><path d="M1 5 L12 2 L12 15 L1 18Z" fill="none" stroke="#222" stroke-width="1"/><path d="M6.5 0.5 L6.5 19" stroke="#222" stroke-width="1" stroke-dasharray="2.2 1.5"/></svg>
<svg style="left:30px;top:336px;width:18px;height:18px" viewBox="0 0 18 18"><path d="M3 17 L3 3" stroke="#111" stroke-width="1.6"/><path d="M0.5 5.5 L3 0.5 L5.5 5.5Z" fill="#111"/><path d="M2 16 L15 16" stroke="#111" stroke-width="1.6"/><path d="M13 13.5 L18 16 L13 18.5Z" fill="#111"/><rect x="1.5" y="14.5" width="3" height="3" fill="#111"/></svg>
<div class="exp" style="left:13px;top:363px"></div>
<svg style="left:28px;top:356px;width:24px;height:24px" viewBox="0 0 24 24"><path d="M3.3 12.2 L3.3 7.6 L6.6 6.4 L6.6 4.3 L10.4 5.6 L10.4 10.5 L13.9 11.9 L13.9 19.4Z" fill="#f2c614" stroke="#3a2600" stroke-width="0.9" stroke-linejoin="round"/><path d="M6.6 4.3 L10.6 2.3 L15.4 3.8 L10.4 5.6Z" fill="#f8e690" stroke="#3a2600" stroke-width="0.9" stroke-linejoin="round"/><path d="M10.4 5.6 L15.4 3.8 L15.4 8.9 L10.4 10.5Z" fill="#ffe868" stroke="#3a2600" stroke-width="0.9" stroke-linejoin="round"/><path d="M10.4 10.5 L15.4 8.9 L19.4 10.3 L13.9 11.9Z" fill="#faeaa0" stroke="#3a2600" stroke-width="0.9" stroke-linejoin="round"/><path d="M13.9 11.9 L19.4 10.3 L19.4 16.9 L13.9 19.4Z" fill="#fae46a" stroke="#3a2600" stroke-width="0.9" stroke-linejoin="round"/><path d="M3.3 7.6 L5.2 8.3 L6.6 7.7" fill="none" stroke="#3a2600" stroke-width="0.6"/></svg>
<div class="exp" style="left:13px;top:385px"></div>
<svg style="left:28px;top:378px;width:24px;height:24px" viewBox="0 0 24 24"><path d="M3.3 12.2 L3.3 7.6 L6.6 6.4 L6.6 4.3 L10.4 5.6 L10.4 10.5 L13.9 11.9 L13.9 19.4Z" fill="#f2c614" stroke="#3a2600" stroke-width="0.9" stroke-linejoin="round"/><path d="M6.6 4.3 L10.6 2.3 L15.4 3.8 L10.4 5.6Z" fill="#f8e690" stroke="#3a2600" stroke-width="0.9" stroke-linejoin="round"/><path d="M10.4 5.6 L15.4 3.8 L15.4 8.9 L10.4 10.5Z" fill="#ffe868" stroke="#3a2600" stroke-width="0.9" stroke-linejoin="round"/><path d="M10.4 10.5 L15.4 8.9 L19.4 10.3 L13.9 11.9Z" fill="#faeaa0" stroke="#3a2600" stroke-width="0.9" stroke-linejoin="round"/><path d="M13.9 11.9 L19.4 10.3 L19.4 16.9 L13.9 19.4Z" fill="#fae46a" stroke="#3a2600" stroke-width="0.9" stroke-linejoin="round"/><path d="M3.3 7.6 L5.2 8.3 L6.6 7.7" fill="none" stroke="#3a2600" stroke-width="0.6"/></svg>
<div class="exp" style="left:13px;top:407px"></div>
<svg style="left:28px;top:400px;width:24px;height:24px" viewBox="0 0 24 24"><path d="M3.3 12.2 L3.3 7.6 L6.6 6.4 L6.6 4.3 L10.4 5.6 L10.4 10.5 L13.9 11.9 L13.9 19.4Z" fill="#f2c614" stroke="#3a2600" stroke-width="0.9" stroke-linejoin="round"/><path d="M6.6 4.3 L10.6 2.3 L15.4 3.8 L10.4 5.6Z" fill="#f8e690" stroke="#3a2600" stroke-width="0.9" stroke-linejoin="round"/><path d="M10.4 5.6 L15.4 3.8 L15.4 8.9 L10.4 10.5Z" fill="#ffe868" stroke="#3a2600" stroke-width="0.9" stroke-linejoin="round"/><path d="M10.4 10.5 L15.4 8.9 L19.4 10.3 L13.9 11.9Z" fill="#faeaa0" stroke="#3a2600" stroke-width="0.9" stroke-linejoin="round"/><path d="M13.9 11.9 L19.4 10.3 L19.4 16.9 L13.9 19.4Z" fill="#fae46a" stroke="#3a2600" stroke-width="0.9" stroke-linejoin="round"/><path d="M3.3 7.6 L5.2 8.3 L6.6 7.7" fill="none" stroke="#3a2600" stroke-width="0.6"/></svg>
<div class="exp" style="left:13px;top:429px"></div>
<svg style="left:28px;top:422px;width:24px;height:24px" viewBox="0 0 24 24"><path d="M3.3 12.2 L3.3 7.6 L6.6 6.4 L6.6 4.3 L10.4 5.6 L10.4 10.5 L13.9 11.9 L13.9 19.4Z" fill="#f2c614" stroke="#3a2600" stroke-width="0.9" stroke-linejoin="round"/><path d="M6.6 4.3 L10.6 2.3 L15.4 3.8 L10.4 5.6Z" fill="#f8e690" stroke="#3a2600" stroke-width="0.9" stroke-linejoin="round"/><path d="M10.4 5.6 L15.4 3.8 L15.4 8.9 L10.4 10.5Z" fill="#ffe868" stroke="#3a2600" stroke-width="0.9" stroke-linejoin="round"/><path d="M10.4 10.5 L15.4 8.9 L19.4 10.3 L13.9 11.9Z" fill="#faeaa0" stroke="#3a2600" stroke-width="0.9" stroke-linejoin="round"/><path d="M13.9 11.9 L19.4 10.3 L19.4 16.9 L13.9 19.4Z" fill="#fae46a" stroke="#3a2600" stroke-width="0.9" stroke-linejoin="round"/><path d="M3.3 7.6 L5.2 8.3 L6.6 7.7" fill="none" stroke="#3a2600" stroke-width="0.6"/></svg>
<div class="exp" style="left:13px;top:451px"></div>
<svg style="left:28px;top:444px;width:24px;height:24px" viewBox="0 0 24 24"><path d="M3.3 12.2 L3.3 7.6 L6.6 6.4 L6.6 4.3 L10.4 5.6 L10.4 10.5 L13.9 11.9 L13.9 19.4Z" fill="#f2c614" stroke="#3a2600" stroke-width="0.9" stroke-linejoin="round"/><path d="M6.6 4.3 L10.6 2.3 L15.4 3.8 L10.4 5.6Z" fill="#f8e690" stroke="#3a2600" stroke-width="0.9" stroke-linejoin="round"/><path d="M10.4 5.6 L15.4 3.8 L15.4 8.9 L10.4 10.5Z" fill="#ffe868" stroke="#3a2600" stroke-width="0.9" stroke-linejoin="round"/><path d="M10.4 10.5 L15.4 8.9 L19.4 10.3 L13.9 11.9Z" fill="#faeaa0" stroke="#3a2600" stroke-width="0.9" stroke-linejoin="round"/><path d="M13.9 11.9 L19.4 10.3 L19.4 16.9 L13.9 19.4Z" fill="#fae46a" stroke="#3a2600" stroke-width="0.9" stroke-linejoin="round"/><path d="M3.3 7.6 L5.2 8.3 L6.6 7.7" fill="none" stroke="#3a2600" stroke-width="0.6"/></svg>
<div class="exp" style="left:13px;top:473px"></div>
<svg style="left:28px;top:466px;width:24px;height:24px" viewBox="0 0 24 24"><path d="M3.3 12.2 L3.3 7.6 L6.6 6.4 L6.6 4.3 L10.4 5.6 L10.4 10.5 L13.9 11.9 L13.9 19.4Z" fill="#f2c614" stroke="#3a2600" stroke-width="0.9" stroke-linejoin="round"/><path d="M6.6 4.3 L10.6 2.3 L15.4 3.8 L10.4 5.6Z" fill="#f8e690" stroke="#3a2600" stroke-width="0.9" stroke-linejoin="round"/><path d="M10.4 5.6 L15.4 3.8 L15.4 8.9 L10.4 10.5Z" fill="#ffe868" stroke="#3a2600" stroke-width="0.9" stroke-linejoin="round"/><path d="M10.4 10.5 L15.4 8.9 L19.4 10.3 L13.9 11.9Z" fill="#faeaa0" stroke="#3a2600" stroke-width="0.9" stroke-linejoin="round"/><path d="M13.9 11.9 L19.4 10.3 L19.4 16.9 L13.9 19.4Z" fill="#fae46a" stroke="#3a2600" stroke-width="0.9" stroke-linejoin="round"/><path d="M3.3 7.6 L5.2 8.3 L6.6 7.7" fill="none" stroke="#3a2600" stroke-width="0.6"/></svg>
<div class="exp" style="left:13px;top:495px"></div>
<svg style="left:28px;top:488px;width:24px;height:24px" viewBox="0 0 24 24"><path d="M3.3 12.2 L3.3 7.6 L6.6 6.4 L6.6 4.3 L10.4 5.6 L10.4 10.5 L13.9 11.9 L13.9 19.4Z" fill="#f2c614" stroke="#3a2600" stroke-width="0.9" stroke-linejoin="round"/><path d="M6.6 4.3 L10.6 2.3 L15.4 3.8 L10.4 5.6Z" fill="#f8e690" stroke="#3a2600" stroke-width="0.9" stroke-linejoin="round"/><path d="M10.4 5.6 L15.4 3.8 L15.4 8.9 L10.4 10.5Z" fill="#ffe868" stroke="#3a2600" stroke-width="0.9" stroke-linejoin="round"/><path d="M10.4 10.5 L15.4 8.9 L19.4 10.3 L13.9 11.9Z" fill="#faeaa0" stroke="#3a2600" stroke-width="0.9" stroke-linejoin="round"/><path d="M13.9 11.9 L19.4 10.3 L19.4 16.9 L13.9 19.4Z" fill="#fae46a" stroke="#3a2600" stroke-width="0.9" stroke-linejoin="round"/><path d="M3.3 7.6 L5.2 8.3 L6.6 7.7" fill="none" stroke="#3a2600" stroke-width="0.6"/></svg>
<div class="exp" style="left:13px;top:517px"></div>
<svg style="left:26px;top:510px;width:24px;height:24px" viewBox="0 0 24 24"><path d="M11.6 12.8 L11.6 5 Q11.6 2.3 8.5 2.3 Q5.3 2.3 5.3 5 L5.3 15.3 Q5.3 17.8 7.5 17.8 Q9.8 17.8 9.8 15.3 L9.8 6.8 Q9.8 5.2 8.6 5.2 Q7.4 5.2 7.4 6.8 L7.4 13.5" fill="none" stroke="#1a6a9a" stroke-width="1.1"/><path d="M20.8 14.8 L20.8 7 Q20.8 4.3 17.7 4.3 Q14.5 4.3 14.5 7 L14.5 17.3 Q14.5 19.8 16.7 19.8 Q19 19.8 19 17.3 L19 8.8 Q19 7.2 17.8 7.2 Q16.6 7.2 16.6 8.8 L16.6 15.5" fill="none" stroke="#1a6a9a" stroke-width="1.1"/></svg>
<svg style="left:177px;top:269px;width:13px;height:20px" viewBox="0 0 13 20"><path d="M1 5 L12 2 L12 15 L1 18Z" fill="none" stroke="#222" stroke-width="1"/><path d="M6.5 0.5 L6.5 19" stroke="#222" stroke-width="1" stroke-dasharray="2.2 1.5"/></svg>
<svg style="left:177px;top:291px;width:13px;height:20px" viewBox="0 0 13 20"><path d="M1 5 L12 2 L12 15 L1 18Z" fill="none" stroke="#222" stroke-width="1"/><path d="M6.5 0.5 L6.5 19" stroke="#222" stroke-width="1" stroke-dasharray="2.2 1.5"/></svg>
<svg style="left:177px;top:313px;width:13px;height:20px" viewBox="0 0 13 20"><path d="M1 5 L12 2 L12 15 L1 18Z" fill="none" stroke="#222" stroke-width="1"/><path d="M6.5 0.5 L6.5 19" stroke="#222" stroke-width="1" stroke-dasharray="2.2 1.5"/></svg>
<svg style="left:175px;top:336px;width:18px;height:18px" viewBox="0 0 18 18"><path d="M3 17 L3 3" stroke="#111" stroke-width="1.6"/><path d="M0.5 5.5 L3 0.5 L5.5 5.5Z" fill="#111"/><path d="M2 16 L15 16" stroke="#111" stroke-width="1.6"/><path d="M13 13.5 L18 16 L13 18.5Z" fill="#111"/><rect x="1.5" y="14.5" width="3" height="3" fill="#111"/></svg>
<svg style="left:173px;top:356px;width:24px;height:24px" viewBox="0 0 24 24"><path d="M3.3 12.2 L3.3 7.6 L6.6 6.4 L6.6 4.3 L10.4 5.6 L10.4 10.5 L13.9 11.9 L13.9 19.4Z" fill="#f2c614" stroke="#3a2600" stroke-width="0.9" stroke-linejoin="round"/><path d="M6.6 4.3 L10.6 2.3 L15.4 3.8 L10.4 5.6Z" fill="#f8e690" stroke="#3a2600" stroke-width="0.9" stroke-linejoin="round"/><path d="M10.4 5.6 L15.4 3.8 L15.4 8.9 L10.4 10.5Z" fill="#ffe868" stroke="#3a2600" stroke-width="0.9" stroke-linejoin="round"/><path d="M10.4 10.5 L15.4 8.9 L19.4 10.3 L13.9 11.9Z" fill="#faeaa0" stroke="#3a2600" stroke-width="0.9" stroke-linejoin="round"/><path d="M13.9 11.9 L19.4 10.3 L19.4 16.9 L13.9 19.4Z" fill="#fae46a" stroke="#3a2600" stroke-width="0.9" stroke-linejoin="round"/><path d="M3.3 7.6 L5.2 8.3 L6.6 7.7" fill="none" stroke="#3a2600" stroke-width="0.6"/></svg>
<svg style="left:198px;top:356px;width:24px;height:24px" viewBox="0 0 24 24"><defs><linearGradient id="bcf" x1="0" y1="0" x2="1" y2="1"><stop offset="0" stop-color="#2c7ce8"/><stop offset="1" stop-color="#58aaf8"/></linearGradient></defs><path d="M4.5 6.5 L7 3.2 L20 3.2 L16.5 6.5Z" fill="#60b4fa" stroke="#050505" stroke-width="1.1" stroke-linejoin="round"/><path d="M16.5 6.5 L20 3.2 L20 15.5 L16.5 18.9Z" fill="#2a6cd8" stroke="#050505" stroke-width="1.1" stroke-linejoin="round"/><rect x="4.5" y="6.5" width="12" height="12.4" fill="url(#bcf)" stroke="#050505" stroke-width="1.1"/><circle cx="9" cy="13.9" r="3" fill="#151515"/><path d="M7.4 13.9 L8.7 15.2 L10.8 12.3" fill="none" stroke="#fff" stroke-width="1"/></svg>
<svg style="left:222px;top:356px;width:24px;height:24px" viewBox="0 0 24 24"><defs><radialGradient id="ts222_356" cx="0.62" cy="0.35" r="0.7"><stop offset="0" stop-color="#d6d6d6"/><stop offset="0.6" stop-color="#9a9a9a"/><stop offset="1" stop-color="#666"/></radialGradient><clipPath id="cts222_356"><path d="M3.2 21.5 L22.8 21.5 L22.8 2Z"/></clipPath></defs><path d="M3.2 21.5 L22.8 21.5 L22.8 2Z" fill="#fff"/><circle cx="14" cy="13.4" r="5.6" fill="url(#ts222_356)" clip-path="url(#cts222_356)"/><path d="M3.2 21.5 L22.8 21.5 L22.8 2Z" fill="none" stroke="#050505" stroke-width="1.2" stroke-linejoin="miter"/></svg>
<svg style="left:173px;top:378px;width:24px;height:24px" viewBox="0 0 24 24"><path d="M3.3 12.2 L3.3 7.6 L6.6 6.4 L6.6 4.3 L10.4 5.6 L10.4 10.5 L13.9 11.9 L13.9 19.4Z" fill="#f2c614" stroke="#3a2600" stroke-width="0.9" stroke-linejoin="round"/><path d="M6.6 4.3 L10.6 2.3 L15.4 3.8 L10.4 5.6Z" fill="#f8e690" stroke="#3a2600" stroke-width="0.9" stroke-linejoin="round"/><path d="M10.4 5.6 L15.4 3.8 L15.4 8.9 L10.4 10.5Z" fill="#ffe868" stroke="#3a2600" stroke-width="0.9" stroke-linejoin="round"/><path d="M10.4 10.5 L15.4 8.9 L19.4 10.3 L13.9 11.9Z" fill="#faeaa0" stroke="#3a2600" stroke-width="0.9" stroke-linejoin="round"/><path d="M13.9 11.9 L19.4 10.3 L19.4 16.9 L13.9 19.4Z" fill="#fae46a" stroke="#3a2600" stroke-width="0.9" stroke-linejoin="round"/><path d="M3.3 7.6 L5.2 8.3 L6.6 7.7" fill="none" stroke="#3a2600" stroke-width="0.6"/></svg>
<svg style="left:198px;top:378px;width:24px;height:24px" viewBox="0 0 24 24"><defs><linearGradient id="bcf" x1="0" y1="0" x2="1" y2="1"><stop offset="0" stop-color="#2c7ce8"/><stop offset="1" stop-color="#58aaf8"/></linearGradient></defs><path d="M4.5 6.5 L7 3.2 L20 3.2 L16.5 6.5Z" fill="#60b4fa" stroke="#050505" stroke-width="1.1" stroke-linejoin="round"/><path d="M16.5 6.5 L20 3.2 L20 15.5 L16.5 18.9Z" fill="#2a6cd8" stroke="#050505" stroke-width="1.1" stroke-linejoin="round"/><rect x="4.5" y="6.5" width="12" height="12.4" fill="url(#bcf)" stroke="#050505" stroke-width="1.1"/><circle cx="9" cy="13.9" r="3" fill="#151515"/><path d="M7.4 13.9 L8.7 15.2 L10.8 12.3" fill="none" stroke="#fff" stroke-width="1"/></svg>
<svg style="left:222px;top:378px;width:24px;height:24px" viewBox="0 0 24 24"><defs><radialGradient id="ts222_378" cx="0.62" cy="0.35" r="0.7"><stop offset="0" stop-color="#d6d6d6"/><stop offset="0.6" stop-color="#9a9a9a"/><stop offset="1" stop-color="#666"/></radialGradient><clipPath id="cts222_378"><path d="M3.2 21.5 L22.8 21.5 L22.8 2Z"/></clipPath></defs><path d="M3.2 21.5 L22.8 21.5 L22.8 2Z" fill="#fff"/><circle cx="14" cy="13.4" r="5.6" fill="url(#ts222_378)" clip-path="url(#cts222_378)"/><path d="M3.2 21.5 L22.8 21.5 L22.8 2Z" fill="none" stroke="#050505" stroke-width="1.2" stroke-linejoin="miter"/></svg>
<svg style="left:173px;top:400px;width:24px;height:24px" viewBox="0 0 24 24"><path d="M3.3 12.2 L3.3 7.6 L6.6 6.4 L6.6 4.3 L10.4 5.6 L10.4 10.5 L13.9 11.9 L13.9 19.4Z" fill="#f2c614" stroke="#3a2600" stroke-width="0.9" stroke-linejoin="round"/><path d="M6.6 4.3 L10.6 2.3 L15.4 3.8 L10.4 5.6Z" fill="#f8e690" stroke="#3a2600" stroke-width="0.9" stroke-linejoin="round"/><path d="M10.4 5.6 L15.4 3.8 L15.4 8.9 L10.4 10.5Z" fill="#ffe868" stroke="#3a2600" stroke-width="0.9" stroke-linejoin="round"/><path d="M10.4 10.5 L15.4 8.9 L19.4 10.3 L13.9 11.9Z" fill="#faeaa0" stroke="#3a2600" stroke-width="0.9" stroke-linejoin="round"/><path d="M13.9 11.9 L19.4 10.3 L19.4 16.9 L13.9 19.4Z" fill="#fae46a" stroke="#3a2600" stroke-width="0.9" stroke-linejoin="round"/><path d="M3.3 7.6 L5.2 8.3 L6.6 7.7" fill="none" stroke="#3a2600" stroke-width="0.6"/></svg>
<svg style="left:198px;top:400px;width:24px;height:24px" viewBox="0 0 24 24"><defs><linearGradient id="bcf" x1="0" y1="0" x2="1" y2="1"><stop offset="0" stop-color="#2c7ce8"/><stop offset="1" stop-color="#58aaf8"/></linearGradient></defs><path d="M4.5 6.5 L7 3.2 L20 3.2 L16.5 6.5Z" fill="#60b4fa" stroke="#050505" stroke-width="1.1" stroke-linejoin="round"/><path d="M16.5 6.5 L20 3.2 L20 15.5 L16.5 18.9Z" fill="#2a6cd8" stroke="#050505" stroke-width="1.1" stroke-linejoin="round"/><rect x="4.5" y="6.5" width="12" height="12.4" fill="url(#bcf)" stroke="#050505" stroke-width="1.1"/><circle cx="9" cy="13.9" r="3" fill="#151515"/><path d="M7.4 13.9 L8.7 15.2 L10.8 12.3" fill="none" stroke="#fff" stroke-width="1"/></svg>
<svg style="left:222px;top:400px;width:24px;height:24px" viewBox="0 0 24 24"><defs><radialGradient id="ts222_400" cx="0.62" cy="0.35" r="0.7"><stop offset="0" stop-color="#d6d6d6"/><stop offset="0.6" stop-color="#9a9a9a"/><stop offset="1" stop-color="#666"/></radialGradient><clipPath id="cts222_400"><path d="M3.2 21.5 L22.8 21.5 L22.8 2Z"/></clipPath></defs><path d="M3.2 21.5 L22.8 21.5 L22.8 2Z" fill="#fff"/><circle cx="14" cy="13.4" r="5.6" fill="url(#ts222_400)" clip-path="url(#cts222_400)"/><path d="M3.2 21.5 L22.8 21.5 L22.8 2Z" fill="none" stroke="#050505" stroke-width="1.2" stroke-linejoin="miter"/></svg>
<svg style="left:173px;top:422px;width:24px;height:24px" viewBox="0 0 24 24"><path d="M3.3 12.2 L3.3 7.6 L6.6 6.4 L6.6 4.3 L10.4 5.6 L10.4 10.5 L13.9 11.9 L13.9 19.4Z" fill="#f2c614" stroke="#3a2600" stroke-width="0.9" stroke-linejoin="round"/><path d="M6.6 4.3 L10.6 2.3 L15.4 3.8 L10.4 5.6Z" fill="#f8e690" stroke="#3a2600" stroke-width="0.9" stroke-linejoin="round"/><path d="M10.4 5.6 L15.4 3.8 L15.4 8.9 L10.4 10.5Z" fill="#ffe868" stroke="#3a2600" stroke-width="0.9" stroke-linejoin="round"/><path d="M10.4 10.5 L15.4 8.9 L19.4 10.3 L13.9 11.9Z" fill="#faeaa0" stroke="#3a2600" stroke-width="0.9" stroke-linejoin="round"/><path d="M13.9 11.9 L19.4 10.3 L19.4 16.9 L13.9 19.4Z" fill="#fae46a" stroke="#3a2600" stroke-width="0.9" stroke-linejoin="round"/><path d="M3.3 7.6 L5.2 8.3 L6.6 7.7" fill="none" stroke="#3a2600" stroke-width="0.6"/></svg>
<svg style="left:198px;top:422px;width:24px;height:24px" viewBox="0 0 24 24"><defs><linearGradient id="bcf" x1="0" y1="0" x2="1" y2="1"><stop offset="0" stop-color="#2c7ce8"/><stop offset="1" stop-color="#58aaf8"/></linearGradient></defs><path d="M4.5 6.5 L7 3.2 L20 3.2 L16.5 6.5Z" fill="#60b4fa" stroke="#050505" stroke-width="1.1" stroke-linejoin="round"/><path d="M16.5 6.5 L20 3.2 L20 15.5 L16.5 18.9Z" fill="#2a6cd8" stroke="#050505" stroke-width="1.1" stroke-linejoin="round"/><rect x="4.5" y="6.5" width="12" height="12.4" fill="url(#bcf)" stroke="#050505" stroke-width="1.1"/><circle cx="9" cy="13.9" r="3" fill="#151515"/><path d="M7.4 13.9 L8.7 15.2 L10.8 12.3" fill="none" stroke="#fff" stroke-width="1"/></svg>
<svg style="left:222px;top:422px;width:24px;height:24px" viewBox="0 0 24 24"><defs><radialGradient id="ts222_422" cx="0.62" cy="0.35" r="0.7"><stop offset="0" stop-color="#d6d6d6"/><stop offset="0.6" stop-color="#9a9a9a"/><stop offset="1" stop-color="#666"/></radialGradient><clipPath id="cts222_422"><path d="M3.2 21.5 L22.8 21.5 L22.8 2Z"/></clipPath></defs><path d="M3.2 21.5 L22.8 21.5 L22.8 2Z" fill="#fff"/><circle cx="14" cy="13.4" r="5.6" fill="url(#ts222_422)" clip-path="url(#cts222_422)"/><path d="M3.2 21.5 L22.8 21.5 L22.8 2Z" fill="none" stroke="#050505" stroke-width="1.2" stroke-linejoin="miter"/></svg>
<svg style="left:173px;top:444px;width:24px;height:24px" viewBox="0 0 24 24"><path d="M3.3 12.2 L3.3 7.6 L6.6 6.4 L6.6 4.3 L10.4 5.6 L10.4 10.5 L13.9 11.9 L13.9 19.4Z" fill="#f2c614" stroke="#3a2600" stroke-width="0.9" stroke-linejoin="round"/><path d="M6.6 4.3 L10.6 2.3 L15.4 3.8 L10.4 5.6Z" fill="#f8e690" stroke="#3a2600" stroke-width="0.9" stroke-linejoin="round"/><path d="M10.4 5.6 L15.4 3.8 L15.4 8.9 L10.4 10.5Z" fill="#ffe868" stroke="#3a2600" stroke-width="0.9" stroke-linejoin="round"/><path d="M10.4 10.5 L15.4 8.9 L19.4 10.3 L13.9 11.9Z" fill="#faeaa0" stroke="#3a2600" stroke-width="0.9" stroke-linejoin="round"/><path d="M13.9 11.9 L19.4 10.3 L19.4 16.9 L13.9 19.4Z" fill="#fae46a" stroke="#3a2600" stroke-width="0.9" stroke-linejoin="round"/><path d="M3.3 7.6 L5.2 8.3 L6.6 7.7" fill="none" stroke="#3a2600" stroke-width="0.6"/></svg>
<svg style="left:198px;top:444px;width:24px;height:24px" viewBox="0 0 24 24"><defs><linearGradient id="bcf" x1="0" y1="0" x2="1" y2="1"><stop offset="0" stop-color="#2c7ce8"/><stop offset="1" stop-color="#58aaf8"/></linearGradient></defs><path d="M4.5 6.5 L7 3.2 L20 3.2 L16.5 6.5Z" fill="#60b4fa" stroke="#050505" stroke-width="1.1" stroke-linejoin="round"/><path d="M16.5 6.5 L20 3.2 L20 15.5 L16.5 18.9Z" fill="#2a6cd8" stroke="#050505" stroke-width="1.1" stroke-linejoin="round"/><rect x="4.5" y="6.5" width="12" height="12.4" fill="url(#bcf)" stroke="#050505" stroke-width="1.1"/><circle cx="9" cy="13.9" r="3" fill="#151515"/><path d="M7.4 13.9 L8.7 15.2 L10.8 12.3" fill="none" stroke="#fff" stroke-width="1"/></svg>
<svg style="left:222px;top:444px;width:24px;height:24px" viewBox="0 0 24 24"><defs><radialGradient id="ts222_444" cx="0.62" cy="0.35" r="0.7"><stop offset="0" stop-color="#d6d6d6"/><stop offset="0.6" stop-color="#9a9a9a"/><stop offset="1" stop-color="#666"/></radialGradient><clipPath id="cts222_444"><path d="M3.2 21.5 L22.8 21.5 L22.8 2Z"/></clipPath></defs><path d="M3.2 21.5 L22.8 21.5 L22.8 2Z" fill="#fff"/><circle cx="14" cy="13.4" r="5.6" fill="url(#ts222_444)" clip-path="url(#cts222_444)"/><path d="M3.2 21.5 L22.8 21.5 L22.8 2Z" fill="none" stroke="#050505" stroke-width="1.2" stroke-linejoin="miter"/></svg>
<svg style="left:173px;top:466px;width:24px;height:24px" viewBox="0 0 24 24"><path d="M3.3 12.2 L3.3 7.6 L6.6 6.4 L6.6 4.3 L10.4 5.6 L10.4 10.5 L13.9 11.9 L13.9 19.4Z" fill="#f2c614" stroke="#3a2600" stroke-width="0.9" stroke-linejoin="round"/><path d="M6.6 4.3 L10.6 2.3 L15.4 3.8 L10.4 5.6Z" fill="#f8e690" stroke="#3a2600" stroke-width="0.9" stroke-linejoin="round"/><path d="M10.4 5.6 L15.4 3.8 L15.4 8.9 L10.4 10.5Z" fill="#ffe868" stroke="#3a2600" stroke-width="0.9" stroke-linejoin="round"/><path d="M10.4 10.5 L15.4 8.9 L19.4 10.3 L13.9 11.9Z" fill="#faeaa0" stroke="#3a2600" stroke-width="0.9" stroke-linejoin="round"/><path d="M13.9 11.9 L19.4 10.3 L19.4 16.9 L13.9 19.4Z" fill="#fae46a" stroke="#3a2600" stroke-width="0.9" stroke-linejoin="round"/><path d="M3.3 7.6 L5.2 8.3 L6.6 7.7" fill="none" stroke="#3a2600" stroke-width="0.6"/></svg>
<svg style="left:198px;top:466px;width:24px;height:24px" viewBox="0 0 24 24"><defs><linearGradient id="bcf" x1="0" y1="0" x2="1" y2="1"><stop offset="0" stop-color="#2c7ce8"/><stop offset="1" stop-color="#58aaf8"/></linearGradient></defs><path d="M4.5 6.5 L7 3.2 L20 3.2 L16.5 6.5Z" fill="#60b4fa" stroke="#050505" stroke-width="1.1" stroke-linejoin="round"/><path d="M16.5 6.5 L20 3.2 L20 15.5 L16.5 18.9Z" fill="#2a6cd8" stroke="#050505" stroke-width="1.1" stroke-linejoin="round"/><rect x="4.5" y="6.5" width="12" height="12.4" fill="url(#bcf)" stroke="#050505" stroke-width="1.1"/><circle cx="9" cy="13.9" r="3" fill="#151515"/><path d="M7.4 13.9 L8.7 15.2 L10.8 12.3" fill="none" stroke="#fff" stroke-width="1"/></svg>
<svg style="left:222px;top:466px;width:24px;height:24px" viewBox="0 0 24 24"><defs><radialGradient id="ts222_466" cx="0.62" cy="0.35" r="0.7"><stop offset="0" stop-color="#e4e6fa"/><stop offset="0.6" stop-color="#aeb2d8"/><stop offset="1" stop-color="#7a7ea8"/></radialGradient><clipPath id="cts222_466"><path d="M3.2 21.5 L22.8 21.5 L22.8 2Z"/></clipPath></defs><path d="M3.2 21.5 L22.8 21.5 L22.8 2Z" fill="#fff"/><circle cx="14" cy="13.4" r="5.6" fill="url(#ts222_466)" clip-path="url(#cts222_466)"/><path d="M3.2 21.5 L22.8 21.5 L22.8 2Z" fill="none" stroke="#050505" stroke-width="1.2" stroke-linejoin="miter"/></svg>
<svg style="left:173px;top:488px;width:24px;height:24px" viewBox="0 0 24 24"><path d="M3.3 12.2 L3.3 7.6 L6.6 6.4 L6.6 4.3 L10.4 5.6 L10.4 10.5 L13.9 11.9 L13.9 19.4Z" fill="#f2c614" stroke="#3a2600" stroke-width="0.9" stroke-linejoin="round"/><path d="M6.6 4.3 L10.6 2.3 L15.4 3.8 L10.4 5.6Z" fill="#f8e690" stroke="#3a2600" stroke-width="0.9" stroke-linejoin="round"/><path d="M10.4 5.6 L15.4 3.8 L15.4 8.9 L10.4 10.5Z" fill="#ffe868" stroke="#3a2600" stroke-width="0.9" stroke-linejoin="round"/><path d="M10.4 10.5 L15.4 8.9 L19.4 10.3 L13.9 11.9Z" fill="#faeaa0" stroke="#3a2600" stroke-width="0.9" stroke-linejoin="round"/><path d="M13.9 11.9 L19.4 10.3 L19.4 16.9 L13.9 19.4Z" fill="#fae46a" stroke="#3a2600" stroke-width="0.9" stroke-linejoin="round"/><path d="M3.3 7.6 L5.2 8.3 L6.6 7.7" fill="none" stroke="#3a2600" stroke-width="0.6"/></svg>
<svg style="left:198px;top:488px;width:24px;height:24px" viewBox="0 0 24 24"><defs><linearGradient id="bcf" x1="0" y1="0" x2="1" y2="1"><stop offset="0" stop-color="#2c7ce8"/><stop offset="1" stop-color="#58aaf8"/></linearGradient></defs><path d="M4.5 6.5 L7 3.2 L20 3.2 L16.5 6.5Z" fill="#60b4fa" stroke="#050505" stroke-width="1.1" stroke-linejoin="round"/><path d="M16.5 6.5 L20 3.2 L20 15.5 L16.5 18.9Z" fill="#2a6cd8" stroke="#050505" stroke-width="1.1" stroke-linejoin="round"/><rect x="4.5" y="6.5" width="12" height="12.4" fill="url(#bcf)" stroke="#050505" stroke-width="1.1"/><circle cx="9" cy="13.9" r="3" fill="#151515"/><path d="M7.4 13.9 L8.7 15.2 L10.8 12.3" fill="none" stroke="#fff" stroke-width="1"/></svg>
<svg style="left:222px;top:488px;width:24px;height:24px" viewBox="0 0 24 24"><defs><radialGradient id="ts222_488" cx="0.62" cy="0.35" r="0.7"><stop offset="0" stop-color="#9a9a9a"/><stop offset="0.6" stop-color="#5a5a5a"/><stop offset="1" stop-color="#3a3a3a"/></radialGradient><clipPath id="cts222_488"><path d="M3.2 21.5 L22.8 21.5 L22.8 2Z"/></clipPath></defs><path d="M3.2 21.5 L22.8 21.5 L22.8 2Z" fill="#fff"/><circle cx="14" cy="13.4" r="5.6" fill="url(#ts222_488)" clip-path="url(#cts222_488)"/><path d="M3.2 21.5 L22.8 21.5 L22.8 2Z" fill="none" stroke="#050505" stroke-width="1.2" stroke-linejoin="miter"/></svg>
<div style="left:5px;top:532px;width:165px;height:2px;background:#2a5db0"></div>
<div style="left:5px;top:627px;width:165px;height:16px;background:#ececec"></div>
<div style="left:22px;top:628px;width:43px;height:14px;border:1px solid #a8a8a8;border-radius:2px;background:linear-gradient(#f6f6f6,#dedede)"></div>
<div style="left:39px;top:632px;width:1px;height:6px;background:#555;box-shadow:2px 0 #555,4px 0 #555"></div>
<div style="left:9px;top:631px;width:0;height:0;border-top:4px solid transparent;border-bottom:4px solid transparent;border-right:4px solid #555"></div>
<div style="left:160px;top:631px;width:0;height:0;border-top:4px solid transparent;border-bottom:4px solid transparent;border-left:4px solid #555"></div>
<div style="left:272px;top:105px;width:1px;height:539px;background:#8a8a8a"></div>
<div style="left:272px;top:345px;width:9px;height:39px;background:#f6f6f6;border:1px solid #8a8a8a;border-left:none"></div>
<div style="left:273px;top:361px;width:6px;height:6px;border-radius:3px;background:#cdcdcd;border:1px solid #a8a8a8"></div>
<svg style="left:14px;top:130px;width:24px;height:24px" viewBox="0 0 24 24"><path d="M3.3 12.3 L3.3 7.8 L6.6 6.6 L6.6 4.6 L10.6 2.4 L14.7 3.8 L10.3 6.2 L10.3 11.4 L14.5 13.5 L14.5 19.6Z" fill="#f2c614" stroke="#3a2600" stroke-width="0.9" stroke-linejoin="round"/><path d="M6.6 4.6 L10.6 2.4 L14.7 3.8 L10.3 6.2Z" fill="#f8e690" stroke="#3a2600" stroke-width="0.9" stroke-linejoin="round"/><path d="M14.5 13.5 L19.8 11 L19.8 17 L14.5 19.6Z" fill="#fae46a" stroke="#3a2600" stroke-width="0.9" stroke-linejoin="round"/><path d="M10.3 6.1 L15 4 L19.8 5.6 L14.5 8Z" fill="#b8e0f4" stroke="#0c3a60" stroke-width="0.9" stroke-linejoin="round"/><path d="M10.3 6.1 L14.5 8 L14.5 13.5 L10.3 11.4Z" fill="#7cc0e6" stroke="#0c3a60" stroke-width="0.9" stroke-linejoin="round"/><path d="M14.5 8 L19.8 5.6 L19.8 11 L14.5 13.5Z" fill="#98d0ee" stroke="#0c3a60" stroke-width="0.9" stroke-linejoin="round"/></svg>
<svg style="left:56px;top:132px;width:18px;height:18px" viewBox="0 0 18 18"><rect x="0.6" y="0.6" width="16.8" height="16.8" rx="1.5" fill="#fff" stroke="#1a3a5a" stroke-width="1.1"/><rect x="1" y="1" width="16" height="3" fill="#4a9ad0"/><rect x="2.5" y="6" width="3.5" height="2" fill="#3a8ac8" stroke="#1a3a5a" stroke-width="0.5"/><rect x="2.5" y="9.5" width="3.5" height="2" fill="#3a8ac8" stroke="#1a3a5a" stroke-width="0.5"/><rect x="2.5" y="13" width="3.5" height="2" fill="#3a8ac8" stroke="#1a3a5a" stroke-width="0.5"/><path d="M8 7 L15.5 7 M8 10.5 L15.5 10.5 M8 14 L15.5 14" stroke="#222" stroke-width="1"/></svg>
<svg style="left:98px;top:132px;width:16px;height:18px" viewBox="0 0 16 18"><path d="M2 1 L2 17 M2 4 L6 4 M2 14 L6 14" stroke="#222" stroke-width="1.2" fill="none"/><path d="M6 1.5 L9 1.5 L11 3.5 L11 7 L6 7Z" fill="#fff" stroke="#222" stroke-width="1"/><path d="M6 11 L9 11 L11 13 L11 16.5 L6 16.5Z" fill="#fff" stroke="#222" stroke-width="1"/><rect x="9" y="4.5" width="4.5" height="4" fill="#fff" stroke="#222" stroke-width="1"/><rect x="9" y="12" width="4.5" height="4.5" fill="#fff" stroke="#222" stroke-width="1"/></svg>
<svg style="left:135px;top:131px;width:20px;height:20px" viewBox="0 0 20 20"><circle cx="10" cy="10" r="6" fill="none" stroke="#111" stroke-width="1.8"/><path d="M10 1 L10 19 M1 10 L19 10" stroke="#111" stroke-width="1.8"/></svg>
<svg style="left:176px;top:132px;width:18px;height:18px" viewBox="0 0 18 18"><defs><radialGradient id="bg5" cx="0.35" cy="0.3" r="0.75"><stop offset="0" stop-color="#fff" stop-opacity="0.7"/><stop offset="0.5" stop-color="#fff" stop-opacity="0"/></radialGradient></defs><path d="M9 9 L9 0.6999999999999993 A8.3 8.3 0 0 0 0.6999999999999993 10.245000000000001Z" fill="#4a8ee0"/><path d="M9 9 L9 0.6999999999999993 A8.3 8.3 0 0 1 17.3 10.245000000000001Z" fill="#e04848"/><path d="M9 9 L0.6999999999999993 10.245000000000001 A8.3 8.3 0 0 0 9 17.3Z" fill="#3aaa48"/><path d="M9 9 L17.3 10.245000000000001 A8.3 8.3 0 0 1 9 17.3Z" fill="#f0c838"/><circle cx="9" cy="9" r="8.3" fill="url(#bg5)"/><ellipse cx="12" cy="6.5" rx="2" ry="4.2" transform="rotate(-25 12 6.5)" fill="#111"/><circle cx="9" cy="9" r="8.3" fill="none" stroke="#6a4a20" stroke-width="0.5"/></svg>
<svg style="left:211px;top:134px;width:10px;height:12px" viewBox="0 0 10 12"><path d="M8 1 L2.5 6 L8 11" fill="none" stroke="#1a1a1a" stroke-width="1.8"/></svg>
<svg style="left:226px;top:130px;width:20px;height:20px" viewBox="0 0 20 20"><defs><radialGradient id="bg6" cx="0.35" cy="0.3" r="0.75"><stop offset="0" stop-color="#fff" stop-opacity="0.7"/><stop offset="0.5" stop-color="#fff" stop-opacity="0"/></radialGradient></defs><path d="M8 8 L8 0.40000000000000036 A7.6 7.6 0 0 0 0.40000000000000036 9.14Z" fill="#4a8ee0"/><path d="M8 8 L8 0.40000000000000036 A7.6 7.6 0 0 1 15.6 9.14Z" fill="#e04848"/><path d="M8 8 L0.40000000000000036 9.14 A7.6 7.6 0 0 0 8 15.6Z" fill="#3aaa48"/><path d="M8 8 L15.6 9.14 A7.6 7.6 0 0 1 8 15.6Z" fill="#f0c838"/><circle cx="8" cy="8" r="7.6" fill="url(#bg6)"/><path d="M17 7 L19 9 L9 17.5 L6 18.5 L7 15.5Z" fill="#f8d040" stroke="#222" stroke-width="0.8"/><path d="M16 6 L19.5 9.5 L18.5 10.5 L15 7Z" fill="#e04040" stroke="#222" stroke-width="0.6"/></svg>
<div style="left:250px;top:128px;width:22px;height:24px;overflow:hidden"><svg style="left:0;top:0;width:24px;height:24px" viewBox="0 0 24 24"><path d="M8 5 L12.5 3 L17 5 L17 10 L12.5 12 L8 10Z" fill="#f8f0c8" stroke="#d8cc98" stroke-width="0.8" stroke-linejoin="round"/><path d="M8 5 L12.5 7 L17 5 M12.5 7 L12.5 12" fill="none" stroke="#d8cc98" stroke-width="0.8" stroke-linejoin="round"/><path d="M13 12 L17.5 10 L22 12 L22 17 L17.5 19 L13 17Z" fill="#f8f0c8" stroke="#d8cc98" stroke-width="0.8" stroke-linejoin="round"/><path d="M13 12 L17.5 14 L22 12 M17.5 14 L17.5 19" fill="none" stroke="#d8cc98" stroke-width="0.8" stroke-linejoin="round"/><path d="M6 13 L10.5 11 L15 13 L15 18 L10.5 20 L6 18Z" fill="#f4ecc0" stroke="#d8cc98" stroke-width="0.8" stroke-linejoin="round"/><path d="M2 17.5 Q7.3 10.5 12.6 17.5 Q7.3 24.5 2 17.5Z" fill="#fff" stroke="#111" stroke-width="1.1"/><circle cx="7.3" cy="17.5" r="2.3" fill="#111"/><circle cx="6.6" cy="16.8" r="0.7" fill="#fff"/></svg></div>
<svg style="left:10px;top:157px;width:24px;height:20px" viewBox="0 0 24 20"><rect x="1" y="1" width="17" height="3.5" rx="1.5" fill="#5ab0e0" stroke="#1a4a6a" stroke-width="0.9"/><path d="M1.5 4.5 L8 11 L8 18.5 L11 17 L11 11 L17.5 4.5" fill="#fafafa" stroke="#222" stroke-width="1"/><path d="M19 11 L24 11 L21.5 14Z" fill="#222"/></svg>
<svg style="left:626px;top:90px;width:18px;height:18px" viewBox="0 0 18 18"><circle cx="10.5" cy="7.5" r="6.5" fill="#f4f6f8" stroke="#777" stroke-width="1.2"/><path d="M10.5 3 L9 4.8 L12 4.8Z M10.5 12 L9 10.2 L12 10.2Z M6 7.5 L7.8 6 L7.8 9Z M15 7.5 L13.2 6 L13.2 9Z" fill="#444"/><path d="M1.5 16.5 L6 12" stroke="#4a90c0" stroke-width="3" stroke-linecap="round"/></svg>
<svg style="left:651px;top:90px;width:19px;height:18px" viewBox="0 0 19 18"><rect x="6.5" y="0.5" width="12" height="12" fill="none" stroke="#555" stroke-width="1" stroke-dasharray="2 1.3"/><circle cx="10.5" cy="7.5" r="6.3" fill="#eef0f2" stroke="#888" stroke-width="1.1"/><path d="M1.5 16.5 L6 12" stroke="#4a90c0" stroke-width="3" stroke-linecap="round"/></svg>
<svg style="left:678px;top:90px;width:19px;height:18px" viewBox="0 0 19 18"><g transform="translate(3.5 14.2) rotate(-43.4)"><defs><linearGradient id="tlg" x1="0" y1="0" x2="0" y2="1"><stop offset="0" stop-color="#d8d8d8"/><stop offset="0.45" stop-color="#fafafa"/><stop offset="1" stop-color="#bcbcbc"/></linearGradient></defs><path d="M0 -3.6 L9 -3.6 L9.8 -2.6 L18 -2.6 L18 2.6 L9.8 2.6 L9 3.6 L0 3.6Z" fill="url(#tlg)" stroke="#777" stroke-width="0.8"/><path d="M9 -3.6 L9 3.6" stroke="#999" stroke-width="0.6"/><ellipse cx="0" cy="0" rx="1.6" ry="3.6" fill="#e8e8e8" stroke="#777" stroke-width="0.8"/><ellipse cx="0" cy="0" rx="0.8" ry="2" fill="#aaa"/></g><path d="M18.5 13 L11 13" stroke="#4a90c0" stroke-width="2.4"/><path d="M8.2 13 L12.2 9.3 L12.2 16.7Z" fill="#4a90c0"/></svg>
<svg style="left:704px;top:90px;width:19px;height:18px" viewBox="0 0 19 18"><defs><linearGradient id="scg" x1="0" x2="1"><stop offset="0" stop-color="#9a9a9a"/><stop offset="0.5" stop-color="#e8e8e8"/><stop offset="1" stop-color="#a0a0a0"/></linearGradient><pattern id="hat" width="2.5" height="2.5" patternUnits="userSpaceOnUse" patternTransform="rotate(45)"><rect width="2.5" height="2.5" fill="#8cc8e8"/><rect width="1" height="2.5" fill="#3a7aa8"/></pattern></defs><path d="M0.5 4.2 A8.5 3.2 0 0 1 17.5 4.2 L17.5 14.8 L12 16.8 L12 6 A3 1.2 0 0 0 6 6 L6 16.8 L0.5 14.8Z" fill="#f4f4f4" stroke="#666" stroke-width="0.9"/><path d="M6 6 A3 1.2 0 0 1 12 6 L12 16.2 A3 1.2 0 0 1 6 16.2Z" fill="url(#scg)" stroke="#666" stroke-width="0.7"/><path d="M0.5 4.2 L6 6.2 L6 16.8 L0.5 14.8Z" fill="url(#hat)" stroke="#335" stroke-width="0.8"/><path d="M12 6.2 L17.5 4.2 L17.5 14.8 L12 16.8Z" fill="url(#hat)" stroke="#335" stroke-width="0.8"/></svg>
<svg style="left:730px;top:90px;width:19px;height:18px" viewBox="0 0 19 18"><g transform="translate(2.6 14.2) rotate(-43.4)"><defs><linearGradient id="tlg2" x1="0" y1="0" x2="0" y2="1"><stop offset="0" stop-color="#d8d8d8"/><stop offset="0.45" stop-color="#fafafa"/><stop offset="1" stop-color="#bcbcbc"/></linearGradient></defs><path d="M0 -3.6 L9 -3.6 L9.8 -2.6 L18 -2.6 L18 2.6 L9.8 2.6 L9 3.6 L0 3.6Z" fill="url(#tlg2)" stroke="#777" stroke-width="0.8"/><path d="M9 -3.6 L9 3.6" stroke="#999" stroke-width="0.6"/><ellipse cx="0" cy="0" rx="1.6" ry="3.6" fill="#e8e8e8" stroke="#777" stroke-width="0.8"/><ellipse cx="0" cy="0" rx="0.8" ry="2" fill="#aaa"/></g><path d="M11.5 0.5 L4 1 L0.5 8 L4.5 6.5 L2.5 10 L10 4.5 L6.5 4.8Z" fill="#f8e060" stroke="#d06010" stroke-width="0.7" stroke-linejoin="round"/><text x="13.5" y="17.5" font-family="Liberation Serif" font-weight="bold" font-size="10.5" fill="#3a7aaa" text-anchor="middle" style="-webkit-text-stroke:0">A</text></svg>
<svg style="left:756px;top:90px;width:19px;height:19px" viewBox="0 0 19 19"><defs><linearGradient id="vog" x1="0" y1="0" x2="1" y2="1"><stop offset="0" stop-color="#b4e0f6"/><stop offset="1" stop-color="#78b4d4"/></linearGradient></defs><rect x="5.4" y="0.6" width="12.3" height="12" fill="#fff" stroke="#555" stroke-width="0.9"/><path d="M0.6 5.2 L5.4 0.6 M13 5.2 L17.7 0.6 M13 17.6 L17.7 12.6" stroke="#333" stroke-width="0.8"/><path d="M9.3 0.6 L9.3 4 M7.8 2.6 L9.3 4.4 L10.8 2.6 M17.7 9 L14 9 M15.5 7.5 L13.6 9 L15.5 10.5" fill="none" stroke="#333" stroke-width="1"/><rect x="0.6" y="5.2" width="12.4" height="12.4" fill="url(#vog)" stroke="#3a6a8c" stroke-width="1.1"/></svg>
<div class="harr" style="left:781px;top:98px"></div>
<svg style="left:797px;top:89px;width:18px;height:20px" viewBox="0 0 18 20"><defs><linearGradient id="dsg" x1="0" x2="1"><stop offset="0" stop-color="#5a9ac4"/><stop offset="0.35" stop-color="#a4d4ee"/><stop offset="0.85" stop-color="#7cbcdc"/><stop offset="0.86" stop-color="#f4f4f4"/><stop offset="1" stop-color="#f0f0f0"/></linearGradient></defs><path d="M0.4 2.8 L9.4 0.4 L16.9 4.4 L11.4 6.3Z" fill="#fff" stroke="#555" stroke-width="0.8" stroke-linejoin="round"/><path d="M0.4 2.8 L6.5 1.2 L14 5.3 L11.4 6.3Z" fill="#9cd0ec"/><path d="M0.4 2.8 L11.4 6.3 L11.4 19 L0.6 16.4Z" fill="url(#dsg)" stroke="#555" stroke-width="0.8" stroke-linejoin="round"/><path d="M11.4 6.3 L16.9 4.4 L16.9 16 L11.4 19Z" fill="#f2f2f2" stroke="#555" stroke-width="0.8" stroke-linejoin="round"/></svg>
<div class="harr" style="left:821px;top:98px"></div>
<svg style="left:836px;top:90px;width:19px;height:18px" viewBox="0 0 19 18"><path d="M1 9 Q9.5 1 18 9 Q9.5 17 1 9Z" fill="#f4f4f4" stroke="#aaa" stroke-width="1"/><circle cx="9.5" cy="9" r="4" fill="#777"/><path d="M9.5 1 L9.5 17.5" stroke="#333" stroke-width="1.2"/></svg>
<div class="harr" style="left:861px;top:98px"></div>
<svg style="left:876px;top:89px;width:20px;height:20px" viewBox="0 0 20 20"><defs><radialGradient id="bh1" cx="0.35" cy="0.3" r="0.75"><stop offset="0" stop-color="#fff" stop-opacity="0.7"/><stop offset="0.5" stop-color="#fff" stop-opacity="0"/></radialGradient></defs><path d="M8 8 L8 0.40000000000000036 A7.6 7.6 0 0 0 0.40000000000000036 9.14Z" fill="#4a8ee0"/><path d="M8 8 L8 0.40000000000000036 A7.6 7.6 0 0 1 15.6 9.14Z" fill="#e04848"/><path d="M8 8 L0.40000000000000036 9.14 A7.6 7.6 0 0 0 8 15.6Z" fill="#3aaa48"/><path d="M8 8 L15.6 9.14 A7.6 7.6 0 0 1 8 15.6Z" fill="#f0c838"/><circle cx="8" cy="8" r="7.6" fill="url(#bh1)"/><path d="M17 7 L19 9 L9 17.5 L6 18.5 L7 15.5Z" fill="#f8e070" stroke="#222" stroke-width="0.8"/><path d="M16 6 L19.5 9.5 L18.5 10.5 L15 7Z" fill="#e04040" stroke="#222" stroke-width="0.6"/></svg>
<svg style="left:901px;top:89px;width:19px;height:20px" viewBox="0 0 19 20"><rect x="0.5" y="8" width="18" height="11.5" fill="#3a3a3a"/><path d="M1.5 10 L5 10 L5 13 L1.5 13Z M8 10 L11 10 L11 13 L8 13Z M14 10 L17.5 10 L17.5 13 L14 13Z M5 15.5 L8 15.5 L8 18.5 L5 18.5Z M11 15.5 L14 15.5 L14 18.5 L11 18.5Z" fill="#f4f4f4"/><path d="M1.5 13.5 L17.5 13.5 L17.5 15 L1.5 15Z" fill="#bbb"/><defs><radialGradient id="bh2" cx="0.35" cy="0.3" r="0.75"><stop offset="0" stop-color="#fff" stop-opacity="0.7"/><stop offset="0.5" stop-color="#fff" stop-opacity="0"/></radialGradient></defs><path d="M9.5 8 L9.5 0.5 A7.5 7.5 0 0 0 2.0 9.125Z" fill="#4a8ee0"/><path d="M9.5 8 L9.5 0.5 A7.5 7.5 0 0 1 17.0 9.125Z" fill="#e04848"/><path d="M9.5 8 L2.0 9.125 A7.5 7.5 0 0 0 9.5 15.5Z" fill="#3aaa48"/><path d="M9.5 8 L17.0 9.125 A7.5 7.5 0 0 1 9.5 15.5Z" fill="#f0c838"/><circle cx="9.5" cy="8" r="7.5" fill="url(#bh2)"/></svg>
<div class="harr" style="left:927px;top:98px"></div>
<svg style="left:942px;top:90px;width:19px;height:18px" viewBox="0 0 19 18"><rect x="0.5" y="0.5" width="18" height="12.5" fill="#d8d8d8" stroke="#555" stroke-width="1"/><rect x="1.5" y="1.5" width="16" height="10.5" fill="#e6e6e6"/><path d="M9.5 13 L9.5 16 M4.5 16.8 L14.5 16.8" stroke="#444" stroke-width="1.6"/></svg>
<div class="harr" style="left:967px;top:98px"></div>
<svg style="left:1201px;top:92px;width:12px;height:14px" viewBox="0 0 12 14"><rect x="0.5" y="0.5" width="11" height="13" fill="#fff" stroke="#9a9a9a" stroke-width="1"/><rect x="0.5" y="0.5" width="11" height="1.5" fill="#9a9a9a"/><path d="M4.5 6 L2 8 L4.5 10Z" fill="#9a9a9a"/></svg>
<svg style="left:1227px;top:92px;width:12px;height:14px" viewBox="0 0 12 14"><rect x="0.5" y="0.5" width="11" height="13" fill="#fff" stroke="#9a9a9a" stroke-width="1"/><rect x="0.5" y="0.5" width="11" height="1.5" fill="#9a9a9a"/><path d="M7.5 6 L10 8 L7.5 10Z" fill="#9a9a9a"/></svg>
<div style="left:967px;top:44px;width:189px;height:24px;background:#fff;border:1px solid #aab4c8;border-left:none"></div>
<svg style="left:942px;top:36px;width:40px;height:36px" viewBox="0 0 40 36"><defs><linearGradient id="sgo" x1="0" y1="0" x2="0" y2="1"><stop offset="0" stop-color="#f4703a"/><stop offset="1" stop-color="#e4400e"/></linearGradient></defs><g transform="rotate(-16 20 18.5)"><rect x="8.5" y="6.5" width="23" height="23" rx="3.5" fill="url(#sgo)"/><path d="M28 12.2 Q20 10.5 14.5 12.5 Q10.5 14.5 12.5 17.3 Q14 19 20.5 18.8 Q26.5 18.7 25.6 21.5 Q24.5 24.5 12 24.3" fill="none" stroke="#fff" stroke-width="3.4" stroke-linecap="round"/></g></svg>
<svg style="left:980px;top:47px;width:18px;height:18px" viewBox="0 0 18 18"><rect x="3" y="5" width="13" height="7.5" fill="none" stroke="#1a6fc8" stroke-width="2.2"/><path d="M9.5 2 L9.5 16" stroke="#1a6fc8" stroke-width="2.2"/></svg>
<svg style="left:1003px;top:47px;width:16px;height:18px" viewBox="0 0 16 18"><circle cx="4.5" cy="7.5" r="1.8" fill="none" stroke="#1a6fc8" stroke-width="1.2"/><circle cx="12.2" cy="10.2" r="2" fill="#1a6fc8"/><path d="M14 10.5 Q14 14 10.8 15.5" fill="none" stroke="#1a6fc8" stroke-width="1.5" stroke-linecap="round"/></svg>
<svg style="left:1025px;top:47px;width:17px;height:18px" viewBox="0 0 17 18"><circle cx="8.5" cy="9" r="7" fill="none" stroke="#1a6fc8" stroke-width="1.6"/><circle cx="6" cy="7" r="1" fill="#1a6fc8"/><circle cx="11" cy="7" r="1" fill="#1a6fc8"/><path d="M5 10.5 Q8.5 14 12 10.5" fill="none" stroke="#1a6fc8" stroke-width="1.4"/></svg>
<svg style="left:1048px;top:46px;width:14px;height:20px" viewBox="0 0 14 20"><rect x="4" y="1" width="6" height="11" rx="3" fill="#1a6fc8"/><path d="M2 8 Q2 14.5 7 14.5 Q12 14.5 12 8" fill="none" stroke="#1a6fc8" stroke-width="1.5"/><path d="M7 14.5 L7 18 M4 18.5 L10 18.5" stroke="#1a6fc8" stroke-width="1.5"/></svg>
<svg style="left:1068px;top:48px;width:18px;height:14px" viewBox="0 0 18 14"><rect x="1" y="1.5" width="15.5" height="11" rx="1.5" fill="none" stroke="#1a6fc8" stroke-width="1.7"/><rect x="3.5" y="4.0" width="1.5" height="1.5" fill="#1a6fc8"/><rect x="6.0" y="4.0" width="1.5" height="1.5" fill="#1a6fc8"/><rect x="8.5" y="4.0" width="1.5" height="1.5" fill="#1a6fc8"/><rect x="11.0" y="4.0" width="1.5" height="1.5" fill="#1a6fc8"/><rect x="13.5" y="4.0" width="1.5" height="1.5" fill="#1a6fc8"/><rect x="3.5" y="6.5" width="1.5" height="1.5" fill="#1a6fc8"/><rect x="6.0" y="6.5" width="1.5" height="1.5" fill="#1a6fc8"/><rect x="8.5" y="6.5" width="1.5" height="1.5" fill="#1a6fc8"/><rect x="11.0" y="6.5" width="1.5" height="1.5" fill="#1a6fc8"/><rect x="13.5" y="6.5" width="1.5" height="1.5" fill="#1a6fc8"/><rect x="5" y="9" width="7.5" height="1.5" fill="#1a6fc8"/></svg>
<svg style="left:1092px;top:47px;width:19px;height:19px" viewBox="0 0 19 19"><circle cx="8" cy="4.5" r="3.5" fill="#b4bcc8"/><path d="M2 15 Q2 9 8 9 Q12 9 13 11 L10 11 L10 17 L2 17Z" fill="#b4bcc8"/><rect x="9.5" y="11" width="9" height="7" fill="#fff" stroke="#b4bcc8" stroke-width="0.8"/><text x="14" y="17" font-size="7" font-weight="bold" font-family="Liberation Sans" fill="#b4bcc8" text-anchor="middle">20</text></svg>
<svg style="left:1114px;top:47px;width:15px;height:18px" viewBox="0 0 15 18"><path d="M4.5 1.5 Q7.5 3.5 10.5 1.5 L14.5 4 L13 8 L11.5 7.5 L11.5 16.5 L3.5 16.5 L3.5 7.5 L2 8 L0.5 4Z" fill="#1a6fc8"/></svg>
<svg style="left:1135px;top:47px;width:16px;height:18px" viewBox="0 0 16 18"><rect x="1" y="2" width="6" height="6" fill="#1a6fc8"/><rect x="9.5" y="2.5" width="5" height="5" fill="none" stroke="#1a6fc8" stroke-width="1.2"/><rect x="1" y="10" width="6" height="6" fill="#1a6fc8"/><rect x="9" y="10" width="6" height="6" fill="#1a6fc8"/></svg>
<svg style="left:276px;top:546px;width:46px;height:58px" viewBox="0 0 46 58"><defs><linearGradient id="tr" x1="0" x2="1"><stop offset="0" stop-color="#b01010"/><stop offset="0.5" stop-color="#f04040"/><stop offset="1" stop-color="#a01010"/></linearGradient><linearGradient id="tg" x1="0" x2="0" y1="0" y2="1"><stop offset="0" stop-color="#107010"/><stop offset="0.45" stop-color="#50b050"/><stop offset="1" stop-color="#0a5a0a"/></linearGradient></defs><text x="38.5" y="10" font-family="Liberation Serif" font-size="10" fill="#ff1010" text-anchor="middle">X</text><path d="M37 40 L37 21 M35 21" stroke="url(#tr)" stroke-width="3.5"/><path d="M34.5 22 L39 13 L43.5 22Z" fill="#e02a2a"/><path d="M15 39.5 L36 40" stroke="url(#tg)" stroke-width="3"/><path d="M8 39 L17 34.5 L17 44Z" fill="#1a7a1a"/><text x="3.5" y="41" font-family="Liberation Serif" font-size="10" fill="#108010" text-anchor="middle">Y</text><circle cx="36" cy="46" r="4.2" fill="#1a1a90"/><circle cx="36.5" cy="42" r="2.2" fill="#1a1a90"/><text x="34" y="55" font-family="Liberation Serif" font-size="9" fill="#2020ff" text-anchor="middle">Z</text></svg>
<div style="left:0;top:645px;width:1242px;height:11px;background:#f4f4f4"></div>
<div style="left:273px;top:645px;width:969px;height:1px;background:#a0a0a0"></div>
<div style="left:5px;top:645px;width:1px;height:11px;background:#86aab4"></div>
<div style="left:32px;top:645px;width:65px;height:11px;background:#b4b4b4;border-top:1px solid #222"></div>
<div style="left:47px;top:646px;width:1px;height:10px;background:#e0e0e0"></div>
<div style="left:63px;top:646px;width:1px;height:10px;background:#e0e0e0"></div>
<div style="left:80px;top:646px;width:1px;height:10px;background:#e0e0e0"></div>
<svg style="left:32px;top:646px;width:65px;height:10px" viewBox="0 0 65 10"><path d="M5 2 L5 10 M11 2 L6 6 L11 10Z" stroke="#8a8a8a" fill="#8a8a8a" stroke-width="1.2"/><path d="M27 2 L22 6 L27 10Z" fill="#8a8a8a"/><path d="M37 2 L42 6 L37 10Z" fill="#8a8a8a"/><path d="M54 2 L59 6 L54 10Z M60 2 L60 10" stroke="#8a8a8a" fill="#8a8a8a" stroke-width="1.2"/></svg>
<div class="tx" style="left:107px;top:645px;width:28px;line-height:14px">模型</div>
<div class="tab" style="left:142px;top:645px;width:58px;height:13px;line-height:13px;border-top:1px solid #9a9a9a">3D 视图</div>
<div class="tab" style="left:199px;top:645px;width:80px;height:13px;line-height:13px;border-top:1px solid #9a9a9a;text-indent:-5px">运动算例 1</div>
</body></html>
